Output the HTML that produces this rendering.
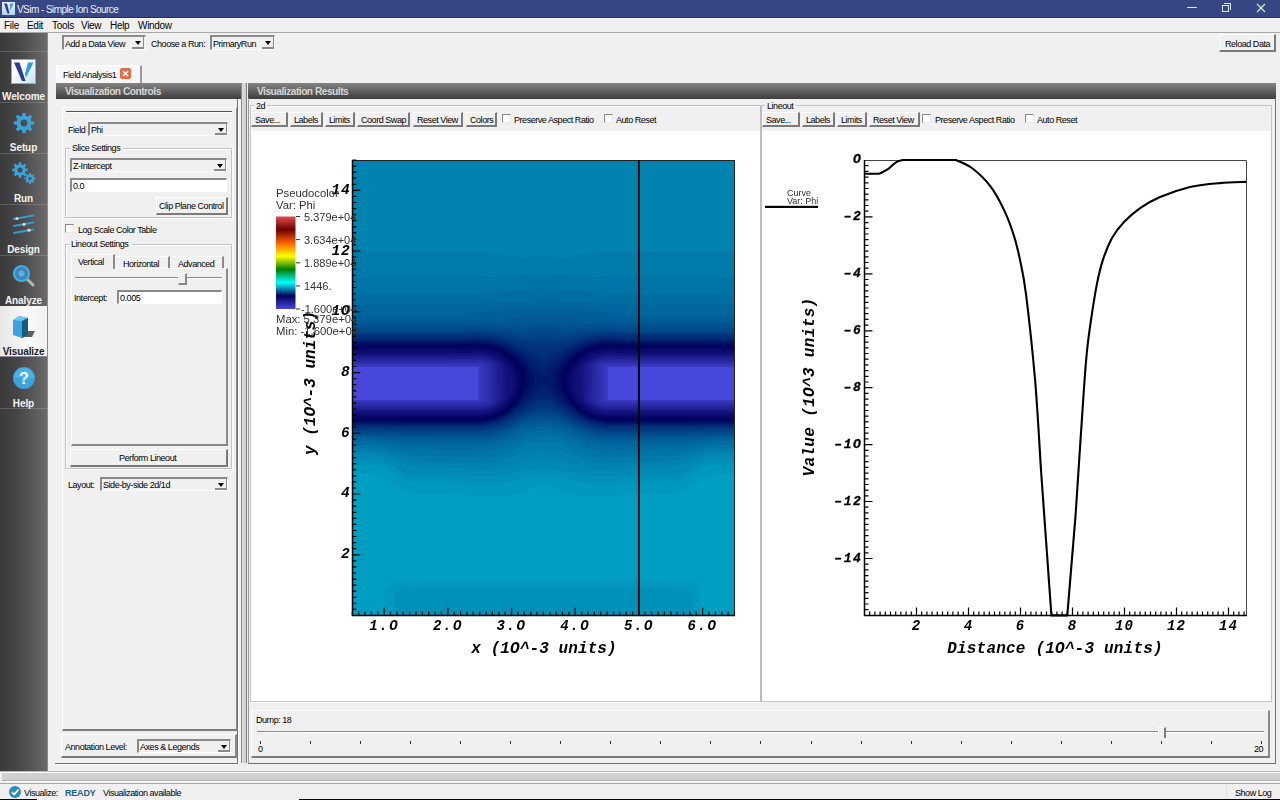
<!DOCTYPE html>
<html><head><meta charset="utf-8">
<style>
*{box-sizing:border-box;margin:0;padding:0}
html,body{width:1280px;height:800px;overflow:hidden;background:#f0f0f0;font-family:"Liberation Sans",sans-serif;font-size:9px;color:#000}
.a{position:absolute}
.t{position:absolute;white-space:nowrap;letter-spacing:-0.45px;line-height:10px;font-size:9px}
#title{left:0;top:0;width:1280px;height:18px;background:#374783;border-bottom:1px solid #1f2c6c}
#menu{left:0;top:18px;width:1280px;height:15px;background:#f0f0f0;border-top:1px solid #fafafa;border-bottom:1px solid #a9a9a9}
#side{left:0;top:33px;width:48px;height:738px;background:linear-gradient(90deg,#3a3a3a 0%,#474747 40%,#6a6a6a 100%);border-right:1px solid #8c8c8c}
.sep{position:absolute;left:0;width:47px;height:1px;background:rgba(255,255,255,0.16)}
.slabel{position:absolute;left:0;width:47px;text-align:center;color:#f4f4f4;font-weight:bold;font-size:10px;letter-spacing:-0.1px;line-height:11px;margin-top:1px}
.sunk{position:absolute;background:#f0f0f0;border-top:2px solid #8a8a8a;border-left:2px solid #8a8a8a;border-bottom:1px solid #fff;border-right:1px solid #fff}
.edit{background:#fff}
.btn{position:absolute;background:#f0f0f0;border-top:1px solid #fff;border-left:1px solid #fff;border-bottom:2px solid #7a7a7a;border-right:2px solid #7a7a7a;text-align:center}
.arrow{position:absolute;width:0;height:0;border-left:3px solid transparent;border-right:3px solid transparent;border-top:4px solid #000}
.grp{position:absolute;border:1px solid #c4c4c4;box-shadow:inset 1px 1px 0 #fff,1px 1px 0 #fff}
.hdr{position:absolute;height:16px;background:linear-gradient(#848484,#3c3c3c);color:#d6d6d6;font-weight:bold;font-size:10.2px;letter-spacing:-0.5px;line-height:16px;padding-top:1px;padding-left:9px;white-space:nowrap}
.chk{position:absolute;width:9px;height:9px;background:#fff;border-top:1px solid #8a8a8a;border-left:1px solid #8a8a8a;border-bottom:1px solid #e8e8e8;border-right:1px solid #e8e8e8}
.mono{font-family:"Liberation Mono",monospace;font-weight:bold;font-style:italic}
</style></head><body>
<!-- Title bar -->
<div id="title" class="a">
  <div class="a" style="left:2px;top:2px;width:13px;height:13px;background:linear-gradient(#e8f0f8,#b8d4ec)"></div>
  <svg class="a" style="left:2px;top:2px" width="13" height="13"><path d="M2 1.5 L5 1.5 L7.5 11.5 L5.5 11.5Z" fill="#2b3b8f"/><path d="M8 1.5 L11.5 1.5 L8.3 8.5Z" fill="#3a9ad8"/></svg>
  <div class="t" style="left:17px;top:5px;color:#eef0f6;font-size:10px;letter-spacing:-0.55px">VSim - Simple Ion Source</div>
  <div class="a" style="left:1187px;top:7px;width:10px;height:1px;background:#e0e4f0"></div>
  <div class="a" style="left:1222px;top:5px;width:7px;height:7px;border:1px solid #e0e4f0"></div>
  <div class="a" style="left:1224px;top:3px;width:7px;height:7px;border-top:1px solid #e0e4f0;border-right:1px solid #e0e4f0"></div>
  <svg class="a" style="left:1256px;top:3px" width="10" height="10"><path d="M1 1L9 9M9 1L1 9" stroke="#e8ecf4" stroke-width="1.1"/></svg>
</div>
<!-- Menu -->
<div id="menu" class="a">
  <div class="t" style="left:4px;top:2px;font-size:10px;letter-spacing:-0.3px">File</div>
  <div class="t" style="left:27px;top:2px;font-size:10px;letter-spacing:-0.3px">Edit</div>
  <div class="t" style="left:52px;top:2px;font-size:10px;letter-spacing:-0.3px">Tools</div>
  <div class="t" style="left:81px;top:2px;font-size:10px;letter-spacing:-0.3px">View</div>
  <div class="t" style="left:110px;top:2px;font-size:10px;letter-spacing:-0.3px">Help</div>
  <div class="t" style="left:138px;top:2px;font-size:10px;letter-spacing:-0.3px">Window</div>
</div>
<!-- Sidebar -->
<div id="side" class="a">
  <div class="sep" style="top:18px"></div>
  <div class="sep" style="top:69px"></div>
  <div class="sep" style="top:120px"></div>
  <div class="sep" style="top:171px"></div>
  <div class="sep" style="top:222px"></div>
  <div class="sep" style="top:273px"></div>
  <div class="a" style="left:0;top:273px;width:47px;height:51px;background:linear-gradient(90deg,#e6e6e6,#fafafa 60%,#f0f0f0);border-bottom:1px solid #8a8aa0"></div>
  <div class="sep" style="top:375px"></div>
  <!-- Welcome icon -->
  <div class="a" style="left:11px;top:26px;width:25px;height:25px;border:1px solid #6ab8e8;background:linear-gradient(135deg,#ffffff 30%,#c8e4f4)"></div>
  <svg class="a" style="left:11px;top:26px" width="25" height="25"><path d="M3 3.5 L8.5 3.5 L14.5 22 L11 22 Z" fill="#2c3a98"/><path d="M17 3.5 L22.5 3.5 L15 18.5 L14 15 Z" fill="#2f9ee0"/></svg>
  <div class="slabel" style="top:57px">Welcome</div>
  <!-- Setup gear -->
  <svg class="a" style="left:12px;top:78px" width="24" height="24"><path fill-rule="evenodd" fill="#3ba4dc" d="M9.1 5.0 L10.5 4.6 L10.2 1.9 L13.8 1.9 L13.5 4.6 L14.9 5.0 L16.2 5.7 L17.9 3.5 L20.5 6.1 L18.3 7.8 L19.0 9.1 L19.4 10.5 L22.1 10.2 L22.1 13.8 L19.4 13.5 L19.0 14.9 L18.3 16.2 L20.5 17.9 L17.9 20.5 L16.2 18.3 L14.9 19.0 L13.5 19.4 L13.8 22.1 L10.2 22.1 L10.5 19.4 L9.1 19.0 L7.8 18.3 L6.1 20.5 L3.5 17.9 L5.7 16.2 L5.0 14.9 L4.6 13.5 L1.9 13.8 L1.9 10.2 L4.6 10.5 L5.0 9.1 L5.7 7.8 L3.5 6.1 L6.1 3.5 L7.8 5.7Z M15.5 12.0 A3.5 3.5 0 1 0 8.5 12.0 A3.5 3.5 0 1 0 15.5 12.0Z"/></svg>
  <div class="slabel" style="top:108px">Setup</div>
  <!-- Run gears -->
  <svg class="a" style="left:10px;top:128px" width="28" height="26"><path fill-rule="evenodd" fill="#3ba4dc" d="M7.8 3.7 L8.8 3.4 L8.6 1.3 L11.4 1.3 L11.2 3.4 L12.2 3.7 L13.1 4.2 L14.5 2.6 L16.4 4.5 L14.8 5.9 L15.3 6.8 L15.6 7.8 L17.7 7.6 L17.7 10.4 L15.6 10.2 L15.3 11.2 L14.8 12.1 L16.4 13.5 L14.5 15.4 L13.1 13.8 L12.2 14.3 L11.2 14.6 L11.4 16.7 L8.6 16.7 L8.8 14.6 L7.8 14.3 L6.9 13.8 L5.5 15.4 L3.6 13.5 L5.2 12.1 L4.7 11.2 L4.4 10.2 L2.3 10.4 L2.3 7.6 L4.4 7.8 L4.7 6.8 L5.2 5.9 L3.6 4.5 L5.5 2.6 L6.9 4.2Z M12.5 9.0 A2.5 2.5 0 1 0 7.5 9.0 A2.5 2.5 0 1 0 12.5 9.0Z"/><path fill-rule="evenodd" fill="#3ba4dc" d="M18.4 13.7 L19.2 13.5 L19.0 12.0 L21.0 12.0 L20.8 13.5 L21.6 13.7 L22.3 14.1 L23.2 12.9 L24.6 14.3 L23.4 15.2 L23.8 15.9 L24.0 16.7 L25.5 16.5 L25.5 18.5 L24.0 18.3 L23.8 19.1 L23.4 19.8 L24.6 20.7 L23.2 22.1 L22.3 20.9 L21.6 21.3 L20.8 21.5 L21.0 23.0 L19.0 23.0 L19.2 21.5 L18.4 21.3 L17.7 20.9 L16.8 22.1 L15.4 20.7 L16.6 19.8 L16.2 19.1 L16.0 18.3 L14.5 18.5 L14.5 16.5 L16.0 16.7 L16.2 15.9 L16.6 15.2 L15.4 14.3 L16.8 12.9 L17.7 14.1Z M21.8 17.5 A1.8 1.8 0 1 0 18.2 17.5 A1.8 1.8 0 1 0 21.8 17.5Z"/></svg>
  <div class="slabel" style="top:159px">Run</div>
  <!-- Design sliders -->
  <svg class="a" style="left:12px;top:180px" width="24" height="24">
    <g stroke="#2e9ad6" stroke-width="2.2" stroke-linecap="round"><path d="M2 6 L21 2.5"/><path d="M2 13 L21 9.5"/><path d="M2 20 L21 16.5"/></g>
    <g fill="#d8d8d8"><circle cx="5" cy="5.5" r="1.6"/><circle cx="12" cy="11.3" r="1.6"/><circle cx="17" cy="17.2" r="1.6"/></g>
  </svg>
  <div class="slabel" style="top:210px">Design</div>
  <!-- Analyze magnifier -->
  <svg class="a" style="left:12px;top:231px" width="24" height="24">
    <path d="M14 14 L21 21" stroke="#b8b8b8" stroke-width="3" stroke-linecap="round"/>
    <circle cx="9.5" cy="9.5" r="7.5" fill="#3a86b8" stroke="#3db0ea" stroke-width="2.2"/>
    <circle cx="9.5" cy="9.5" r="3" fill="#6cc0ea" opacity="0.7"/>
  </svg>
  <div class="slabel" style="top:261px">Analyze</div>
  <!-- Visualize cube -->
  <svg class="a" style="left:11px;top:281px" width="26" height="26">
    <path d="M13 17 L24 17 L21 23 L11 23Z" fill="#444" opacity="0.85"/>
    <path d="M2 6 L8 2 L17 4 L17 21 L11 24 L2 21Z" fill="#3aa4dc"/>
    <path d="M2 6 L8 2 L17 4 L11 7Z" fill="#6ccaf2"/>
    <path d="M11 7 L17 4 L17 21 L11 24Z" fill="#1c5a86"/>
  </svg>
  <div class="slabel" style="top:312px;color:#1a1a1a">Visualize</div>
  <!-- Help -->
  <svg class="a" style="left:12px;top:333px" width="24" height="24">
    <circle cx="12" cy="12" r="11" fill="#3aa4dc"/>
    <path d="M2 12 A10 10 0 0 1 22 12" fill="#5cc0ee" opacity="0.5"/>
    <text x="12" y="17.5" text-anchor="middle" font-family="Liberation Sans" font-weight="bold" font-size="16" fill="#fff">?</text>
  </svg>
  <div class="slabel" style="top:364px">Help</div>
</div>

<!-- Top toolbar -->
<div class="sunk" style="left:62px;top:35px;width:84px;height:15px"></div>
<div class="t" style="left:65px;top:39px">Add a Data View</div>
<div class="t" style="left:151px;top:39px">Choose a Run:</div>
<div class="sunk" style="left:210px;top:35px;width:65px;height:15px"></div>
<div class="t" style="left:213px;top:39px">PrimaryRun</div>
<div class="btn" style="left:1219px;top:34px;width:57px;height:18px"></div>
<div class="t" style="left:1225px;top:39px">Reload Data</div>


<!-- Tab -->
<div class="a" style="left:56px;top:65px;width:86px;height:18px;background:#f7f7f7;border-top:1px solid #fff;border-left:1px solid #fff;border-right:2px solid #9a9a9a"></div>
<div class="t" style="left:63px;top:70px">Field Analysis1</div>
<div class="a" style="left:120px;top:68px;width:11px;height:11px;background:#e56a4a;border-radius:2px"></div>
<svg class="a" style="left:120px;top:68px" width="11" height="11"><path d="M3 3L8 8M8 3L3 8" stroke="#fff" stroke-width="1.6"/></svg>

<!-- Left panel outer -->
<div class="a" style="left:55px;top:98px;width:183px;height:666px;border-right:1px solid #707070;border-bottom:1px solid #707070;box-shadow:1px 1px 0 #fff"></div>
<div class="hdr" style="left:56px;top:83px;width:185px">Visualization Controls</div>
<!-- inner scroll frame -->
<div class="a" style="left:62px;top:107px;width:175px;height:624px;border-top:1px solid #fff;border-left:1px solid #fff;border-right:1px solid #8a8a8a;border-bottom:2px solid #7a7a7a"></div>
<div class="a" style="left:66px;top:111px;width:166px;height:2px;background:#555;border-bottom:1px solid #fff"></div>
<div class="t" style="left:68px;top:125px">Field</div>
<div class="sunk" style="left:88px;top:122px;width:140px;height:14px"></div>
<div class="t" style="left:91px;top:125px">Phi</div>
<div class="a" style="left:215px;top:124px;width:12px;height:11px;border-bottom:2px solid #8a8a8a;border-right:1px solid #8a8a8a"></div>
<div class="arrow" style="left:218px;top:128px"></div>

<div class="grp" style="left:65px;top:148px;width:167px;height:70px"></div>
<div class="a" style="left:70px;top:143px;width:53px;height:10px;background:#f0f0f0"></div>
<div class="t" style="left:72px;top:143px">Slice Settings</div>
<div class="sunk" style="left:70px;top:158px;width:157px;height:14px"></div>
<div class="t" style="left:73px;top:161px">Z-Intercept</div>
<div class="a" style="left:214px;top:160px;width:12px;height:11px;border-bottom:2px solid #8a8a8a;border-right:1px solid #8a8a8a"></div>
<div class="arrow" style="left:217px;top:164px"></div>
<div class="sunk edit" style="left:70px;top:178px;width:157px;height:14px"></div>
<div class="t" style="left:73px;top:181px">0.0</div>
<div class="btn" style="left:156px;top:197px;width:72px;height:18px"></div>
<div class="t" style="left:159px;top:201px">Clip Plane Control</div>

<div class="chk" style="left:65px;top:224px"></div>
<div class="t" style="left:78px;top:225px">Log Scale Color Table</div>

<div class="grp" style="left:65px;top:244px;width:167px;height:225px"></div>
<div class="a" style="left:70px;top:239px;width:62px;height:10px;background:#f0f0f0"></div>
<div class="t" style="left:71px;top:239px">Lineout Settings</div>
<!-- tabs -->
<div class="a" style="left:71px;top:268px;width:157px;height:178px;border-top:1px solid #fff;border-left:1px solid #fff;border-right:2px solid #8a8a8a;border-bottom:2px solid #8a8a8a"></div>
<div class="a" style="left:71px;top:254px;width:44px;height:15px;background:#f0f0f0;border-top:1px solid #fff;border-left:1px solid #fff;border-right:2px solid #8a8a8a"></div>
<div class="t" style="left:78px;top:257px">Vertical</div>
<div class="a" style="left:116px;top:256px;width:54px;height:12px;border-top:1px solid #fff;border-right:2px solid #8a8a8a"></div>
<div class="t" style="left:123px;top:259px">Horizontal</div>
<div class="a" style="left:171px;top:256px;width:53px;height:12px;border-top:1px solid #fff;border-right:2px solid #8a8a8a"></div>
<div class="t" style="left:178px;top:259px">Advanced</div>
<div class="a" style="left:75px;top:277px;width:147px;height:2px;background:#8a8a8a;border-bottom:1px solid #fff"></div>
<div class="a" style="left:178px;top:273px;width:9px;height:12px;background:#f0f0f0;border-top:1px solid #fff;border-left:1px solid #fff;border-right:2px solid #8a8a8a;border-bottom:2px solid #8a8a8a"></div>
<div class="t" style="left:74px;top:293px">Intercept:</div>
<div class="sunk edit" style="left:117px;top:290px;width:105px;height:14px"></div>
<div class="t" style="left:120px;top:293px">0.005</div>
<div class="btn" style="left:70px;top:449px;width:158px;height:18px"></div>
<div class="t" style="left:119px;top:453px">Perform Lineout</div>

<div class="t" style="left:68px;top:480px">Layout:</div>
<div class="sunk" style="left:100px;top:477px;width:128px;height:14px"></div>
<div class="t" style="left:103px;top:480px">Side-by-side 2d/1d</div>
<div class="a" style="left:215px;top:479px;width:12px;height:11px;border-bottom:2px solid #8a8a8a;border-right:1px solid #8a8a8a"></div>
<div class="arrow" style="left:218px;top:483px"></div>

<div class="a" style="left:61px;top:734px;width:176px;height:24px;border-top:1px solid #fff;border-left:1px solid #fff;border-right:2px solid #8a8a8a;border-bottom:2px solid #7a7a7a"></div>
<div class="t" style="left:65px;top:742px">Annotation Level:</div>
<div class="sunk" style="left:137px;top:739px;width:94px;height:14px"></div>
<div class="t" style="left:140px;top:742px">Axes &amp; Legends</div>
<div class="a" style="left:218px;top:741px;width:12px;height:11px;border-bottom:2px solid #8a8a8a;border-right:1px solid #8a8a8a"></div>
<div class="arrow" style="left:221px;top:745px"></div>

<!-- splitter -->
<div class="a" style="left:241px;top:83px;width:7px;height:680px;background:linear-gradient(90deg,#8c8c8c 0,#8c8c8c 1px,#dcdcdc 1px,#cfcfcf 5px,#7c7c7c 5px,#7c7c7c 6px,#f0f0f0 6px)"></div>

<!-- Right panel -->
<div class="hdr" style="left:248px;top:83px;width:1028px">Visualization Results</div>
<div class="a" style="left:248px;top:98px;width:1028px;height:666px;border-left:1px solid #9a9a9a;border-right:1px solid #707070;border-bottom:1px solid #707070"></div>
<!-- 2d group -->
<div class="grp" style="left:250px;top:105px;width:511px;height:597px"></div>
<div class="a" style="left:254px;top:100px;width:13px;height:10px;background:#f0f0f0"></div>
<div class="t" style="left:256px;top:101px">2d</div>
<div class="a" style="left:251px;top:131px;width:509px;height:570px;background:#fff"></div>
<!-- lineout group -->
<div class="grp" style="left:760px;top:105px;width:512px;height:597px;box-shadow:none;border-left:2px solid #bdbdbd"></div>
<div class="a" style="left:765px;top:100px;width:31px;height:10px;background:#f0f0f0"></div>
<div class="t" style="left:767px;top:101px">Lineout</div>
<div class="a" style="left:762px;top:131px;width:509px;height:570px;background:#fff"></div>

<!-- Dump -->
<div class="a" style="left:251px;top:710px;width:1019px;height:48px;border-top:1px solid #fff;border-left:1px solid #fff;border-right:2px solid #8a8a8a;border-bottom:2px solid #7a7a7a"></div>
<div class="t" style="left:256px;top:715px">Dump: 18</div>
<div class="a" style="left:257px;top:731px;width:1007px;height:2px;background:#8a8a8a;border-bottom:1px solid #fff"></div>

<!-- bottom band -->
<div class="a" style="left:0;top:771px;width:1280px;height:12px;background:#f0f0f0;border-top:1px solid #b8b8b8"></div>
<div class="a" style="left:2px;top:772px;width:1278px;height:9px;background:#d0d0d0;border-top:1px solid #fff;border-bottom:1px solid #b0b0b0;box-shadow:0 1px 0 #fff"></div>
<div class="a" style="left:0;top:783px;width:1280px;height:1px;background:#a8a8a8"></div>
<div class="a" style="left:9px;top:786px;width:12px;height:12px;border-radius:50%;background:#2a8ac2"></div>
<svg class="a" style="left:9px;top:786px" width="12" height="12"><path d="M3 6.2L5.2 8.5L9.5 3.5" stroke="#fff" stroke-width="1.8" fill="none"/></svg>
<div class="t" style="left:24px;top:788px">Visualize:</div>
<div class="t" style="left:65px;top:788px;font-weight:bold;color:#1a5e8e;letter-spacing:-0.2px">READY</div>
<div class="t" style="left:103px;top:788px">Visualization available</div>
<div class="a" style="left:1226px;top:784px;width:1px;height:15px;background:#e0e0e0"></div>
<div class="t" style="left:1235px;top:788px">Show Log</div>
<div class="a" style="left:0;top:799px;width:37px;height:1px;background:#000"></div>
<div class="a" style="left:299px;top:799px;width:981px;height:1px;background:#000"></div>

<div class="a" style="left:132px;top:37px;width:12px;height:12px;border-bottom:2px solid #8a8a8a;border-right:1px solid #8a8a8a"></div>
<div class="arrow" style="left:135px;top:41px"></div>
<div class="a" style="left:262px;top:37px;width:12px;height:12px;border-bottom:2px solid #8a8a8a;border-right:1px solid #8a8a8a"></div>
<div class="arrow" style="left:265px;top:41px"></div>
<!-- 2d toolbar -->
<div class="btn" style="left:251px;top:112px;width:37px;height:15px"></div><div class="t" style="left:255px;top:115px">Save...</div>
<div class="btn" style="left:290px;top:112px;width:33px;height:15px"></div><div class="t" style="left:294px;top:115px">Labels</div>
<div class="btn" style="left:325px;top:112px;width:30px;height:15px"></div><div class="t" style="left:329px;top:115px">Limits</div>
<div class="btn" style="left:357px;top:112px;width:53px;height:15px"></div><div class="t" style="left:361px;top:115px">Coord Swap</div>
<div class="btn" style="left:413px;top:112px;width:50px;height:15px"></div><div class="t" style="left:417px;top:115px">Reset View</div>
<div class="btn" style="left:466px;top:112px;width:31px;height:15px"></div><div class="t" style="left:470px;top:115px">Colors</div>
<div class="chk" style="left:502px;top:114px"></div><div class="t" style="left:514px;top:115px">Preserve Aspect Ratio</div>
<div class="chk" style="left:604px;top:114px"></div><div class="t" style="left:616px;top:115px">Auto Reset</div>
<!-- lineout toolbar -->
<div class="btn" style="left:762px;top:112px;width:38px;height:15px"></div><div class="t" style="left:766px;top:115px">Save...</div>
<div class="btn" style="left:802px;top:112px;width:33px;height:15px"></div><div class="t" style="left:806px;top:115px">Labels</div>
<div class="btn" style="left:837px;top:112px;width:30px;height:15px"></div><div class="t" style="left:841px;top:115px">Limits</div>
<div class="btn" style="left:869px;top:112px;width:51px;height:15px"></div><div class="t" style="left:873px;top:115px">Reset View</div>
<div class="chk" style="left:922px;top:114px"></div><div class="t" style="left:935px;top:115px">Preserve Aspect Ratio</div>
<div class="chk" style="left:1025px;top:114px"></div><div class="t" style="left:1037px;top:115px">Auto Reset</div>
<!-- dump slider -->
<div class="a" style="left:1158px;top:727px;width:8px;height:11px;background:#f0f0f0;border-top:1px solid #fff;border-left:1px solid #fff;border-right:2px solid #7a7a7a"></div>
<div class="t" style="left:258px;top:744px">0</div>
<div class="t" style="left:1254px;top:744px">20</div>
<div class="a" style="left:260px;top:741px;width:1px;height:3px;background:#333"></div><div class="a" style="left:310px;top:741px;width:1px;height:3px;background:#333"></div><div class="a" style="left:360px;top:741px;width:1px;height:3px;background:#333"></div><div class="a" style="left:410px;top:741px;width:1px;height:3px;background:#333"></div><div class="a" style="left:460px;top:741px;width:1px;height:3px;background:#333"></div><div class="a" style="left:510px;top:741px;width:1px;height:3px;background:#333"></div><div class="a" style="left:560px;top:741px;width:1px;height:3px;background:#333"></div><div class="a" style="left:610px;top:741px;width:1px;height:3px;background:#333"></div><div class="a" style="left:660px;top:741px;width:1px;height:3px;background:#333"></div><div class="a" style="left:710px;top:741px;width:1px;height:3px;background:#333"></div><div class="a" style="left:760px;top:741px;width:1px;height:3px;background:#333"></div><div class="a" style="left:811px;top:741px;width:1px;height:3px;background:#333"></div><div class="a" style="left:861px;top:741px;width:1px;height:3px;background:#333"></div><div class="a" style="left:911px;top:741px;width:1px;height:3px;background:#333"></div><div class="a" style="left:961px;top:741px;width:1px;height:3px;background:#333"></div><div class="a" style="left:1011px;top:741px;width:1px;height:3px;background:#333"></div><div class="a" style="left:1061px;top:741px;width:1px;height:3px;background:#333"></div><div class="a" style="left:1111px;top:741px;width:1px;height:3px;background:#333"></div><div class="a" style="left:1161px;top:741px;width:1px;height:3px;background:#333"></div><div class="a" style="left:1211px;top:741px;width:1px;height:3px;background:#333"></div><div class="a" style="left:1261px;top:741px;width:1px;height:3px;background:#333"></div>
<!--PLOTS-->
<svg class="a" style="left:352px;top:160px" width="383" height="456"><defs><linearGradient id="f0" x1="0" y1="0" x2="0" y2="1"><stop offset="0.000" stop-color="#0083af"/><stop offset="0.200" stop-color="#0083af"/><stop offset="0.209" stop-color="#007baa"/><stop offset="0.255" stop-color="#007baa"/><stop offset="0.270" stop-color="#0074a6"/><stop offset="0.295" stop-color="#0074a6"/><stop offset="0.310" stop-color="#006da1"/><stop offset="0.341" stop-color="#00669d"/><stop offset="0.378" stop-color="#004386"/><stop offset="0.398" stop-color="#00196b"/><stop offset="0.409" stop-color="#01015d"/><stop offset="0.429" stop-color="#161683"/><stop offset="0.453" stop-color="#3939c2"/><stop offset="0.455" stop-color="#4747db"/><stop offset="0.525" stop-color="#4747db"/><stop offset="0.527" stop-color="#3737bf"/><stop offset="0.567" stop-color="#030360"/><stop offset="0.574" stop-color="#000b62"/><stop offset="0.587" stop-color="#00357d"/><stop offset="0.620" stop-color="#006da1"/><stop offset="0.653" stop-color="#008ab3"/><stop offset="0.684" stop-color="#0098bd"/><stop offset="0.730" stop-color="#009fc1"/><stop offset="1.000" stop-color="#009fc1"/></linearGradient><linearGradient id="f1" x1="0" y1="0" x2="0" y2="1"><stop offset="0.000" stop-color="#0083af"/><stop offset="0.200" stop-color="#0083af"/><stop offset="0.209" stop-color="#007baa"/><stop offset="0.255" stop-color="#007baa"/><stop offset="0.270" stop-color="#0074a6"/><stop offset="0.295" stop-color="#0074a6"/><stop offset="0.310" stop-color="#006da1"/><stop offset="0.341" stop-color="#00669d"/><stop offset="0.378" stop-color="#004386"/><stop offset="0.398" stop-color="#00196b"/><stop offset="0.409" stop-color="#01015d"/><stop offset="0.429" stop-color="#161683"/><stop offset="0.453" stop-color="#3939c2"/><stop offset="0.455" stop-color="#4747db"/><stop offset="0.525" stop-color="#4747db"/><stop offset="0.527" stop-color="#3737bf"/><stop offset="0.567" stop-color="#030360"/><stop offset="0.574" stop-color="#000b62"/><stop offset="0.587" stop-color="#00357d"/><stop offset="0.620" stop-color="#006da1"/><stop offset="0.653" stop-color="#008ab3"/><stop offset="0.686" stop-color="#0098bd"/><stop offset="0.732" stop-color="#009fc1"/><stop offset="1.000" stop-color="#009fc1"/></linearGradient><linearGradient id="f2" x1="0" y1="0" x2="0" y2="1"><stop offset="0.000" stop-color="#0083af"/><stop offset="0.200" stop-color="#0083af"/><stop offset="0.209" stop-color="#007baa"/><stop offset="0.255" stop-color="#007baa"/><stop offset="0.270" stop-color="#0074a6"/><stop offset="0.295" stop-color="#0074a6"/><stop offset="0.310" stop-color="#006da1"/><stop offset="0.341" stop-color="#00669d"/><stop offset="0.378" stop-color="#004386"/><stop offset="0.398" stop-color="#00196b"/><stop offset="0.409" stop-color="#01015d"/><stop offset="0.429" stop-color="#161683"/><stop offset="0.453" stop-color="#3939c2"/><stop offset="0.455" stop-color="#4747db"/><stop offset="0.525" stop-color="#4747db"/><stop offset="0.527" stop-color="#3737bf"/><stop offset="0.567" stop-color="#030360"/><stop offset="0.574" stop-color="#000b62"/><stop offset="0.587" stop-color="#00357d"/><stop offset="0.622" stop-color="#006da1"/><stop offset="0.666" stop-color="#0091b8"/><stop offset="0.719" stop-color="#009fc1"/><stop offset="1.000" stop-color="#009fc1"/></linearGradient><linearGradient id="f3" x1="0" y1="0" x2="0" y2="1"><stop offset="0.000" stop-color="#0083af"/><stop offset="0.200" stop-color="#0083af"/><stop offset="0.209" stop-color="#007baa"/><stop offset="0.255" stop-color="#007baa"/><stop offset="0.270" stop-color="#0074a6"/><stop offset="0.295" stop-color="#0074a6"/><stop offset="0.310" stop-color="#006da1"/><stop offset="0.341" stop-color="#00669d"/><stop offset="0.378" stop-color="#004386"/><stop offset="0.398" stop-color="#00196b"/><stop offset="0.409" stop-color="#01015d"/><stop offset="0.429" stop-color="#161683"/><stop offset="0.453" stop-color="#3939c2"/><stop offset="0.455" stop-color="#4747db"/><stop offset="0.525" stop-color="#4747db"/><stop offset="0.527" stop-color="#3737bf"/><stop offset="0.567" stop-color="#030360"/><stop offset="0.574" stop-color="#000b62"/><stop offset="0.587" stop-color="#00357d"/><stop offset="0.622" stop-color="#006da1"/><stop offset="0.673" stop-color="#0091b8"/><stop offset="0.725" stop-color="#009fc1"/><stop offset="1.000" stop-color="#009cbf"/></linearGradient><linearGradient id="f4" x1="0" y1="0" x2="0" y2="1"><stop offset="0.000" stop-color="#0083af"/><stop offset="0.200" stop-color="#0083af"/><stop offset="0.209" stop-color="#007baa"/><stop offset="0.255" stop-color="#007baa"/><stop offset="0.270" stop-color="#0074a6"/><stop offset="0.295" stop-color="#0074a6"/><stop offset="0.310" stop-color="#006da1"/><stop offset="0.341" stop-color="#00669d"/><stop offset="0.378" stop-color="#004386"/><stop offset="0.398" stop-color="#00196b"/><stop offset="0.409" stop-color="#01015d"/><stop offset="0.429" stop-color="#161683"/><stop offset="0.453" stop-color="#3939c2"/><stop offset="0.455" stop-color="#4747db"/><stop offset="0.525" stop-color="#4747db"/><stop offset="0.527" stop-color="#3737bf"/><stop offset="0.567" stop-color="#030360"/><stop offset="0.574" stop-color="#000b62"/><stop offset="0.587" stop-color="#00357d"/><stop offset="0.618" stop-color="#00669d"/><stop offset="0.675" stop-color="#0091b8"/><stop offset="0.738" stop-color="#009fc1"/><stop offset="0.927" stop-color="#0099be"/><stop offset="1.000" stop-color="#0098bd"/></linearGradient><linearGradient id="f5" x1="0" y1="0" x2="0" y2="1"><stop offset="0.000" stop-color="#0083af"/><stop offset="0.200" stop-color="#0083af"/><stop offset="0.209" stop-color="#007baa"/><stop offset="0.255" stop-color="#007baa"/><stop offset="0.270" stop-color="#0074a6"/><stop offset="0.295" stop-color="#0074a6"/><stop offset="0.310" stop-color="#006da1"/><stop offset="0.341" stop-color="#00669d"/><stop offset="0.378" stop-color="#004386"/><stop offset="0.398" stop-color="#00196b"/><stop offset="0.409" stop-color="#01015d"/><stop offset="0.429" stop-color="#161683"/><stop offset="0.453" stop-color="#3939c2"/><stop offset="0.455" stop-color="#4747db"/><stop offset="0.525" stop-color="#4747db"/><stop offset="0.527" stop-color="#3737bf"/><stop offset="0.567" stop-color="#030360"/><stop offset="0.574" stop-color="#000b62"/><stop offset="0.587" stop-color="#00357d"/><stop offset="0.626" stop-color="#006da1"/><stop offset="0.688" stop-color="#0091b8"/><stop offset="0.745" stop-color="#009fc1"/><stop offset="0.923" stop-color="#009abe"/><stop offset="0.996" stop-color="#0091b8"/><stop offset="1.000" stop-color="#0091b8"/></linearGradient><linearGradient id="f6" x1="0" y1="0" x2="0" y2="1"><stop offset="0.000" stop-color="#0083af"/><stop offset="0.200" stop-color="#0083af"/><stop offset="0.209" stop-color="#007baa"/><stop offset="0.255" stop-color="#007baa"/><stop offset="0.270" stop-color="#0074a6"/><stop offset="0.295" stop-color="#0074a6"/><stop offset="0.310" stop-color="#006da1"/><stop offset="0.341" stop-color="#00669d"/><stop offset="0.378" stop-color="#004386"/><stop offset="0.398" stop-color="#00196b"/><stop offset="0.409" stop-color="#01015d"/><stop offset="0.429" stop-color="#161683"/><stop offset="0.453" stop-color="#3939c2"/><stop offset="0.455" stop-color="#4747db"/><stop offset="0.525" stop-color="#4747db"/><stop offset="0.527" stop-color="#3737bf"/><stop offset="0.567" stop-color="#030360"/><stop offset="0.574" stop-color="#000b62"/><stop offset="0.587" stop-color="#00357d"/><stop offset="0.626" stop-color="#006da1"/><stop offset="0.695" stop-color="#0091b8"/><stop offset="0.752" stop-color="#009fc1"/><stop offset="0.921" stop-color="#009fc1"/><stop offset="0.934" stop-color="#0098bd"/><stop offset="0.993" stop-color="#0091b8"/><stop offset="1.000" stop-color="#0091b8"/></linearGradient><linearGradient id="f7" x1="0" y1="0" x2="0" y2="1"><stop offset="0.000" stop-color="#0083af"/><stop offset="0.200" stop-color="#0083af"/><stop offset="0.209" stop-color="#007baa"/><stop offset="0.255" stop-color="#007baa"/><stop offset="0.270" stop-color="#0074a6"/><stop offset="0.295" stop-color="#0074a6"/><stop offset="0.310" stop-color="#006da1"/><stop offset="0.341" stop-color="#00669d"/><stop offset="0.378" stop-color="#004386"/><stop offset="0.398" stop-color="#00196b"/><stop offset="0.409" stop-color="#01015d"/><stop offset="0.429" stop-color="#161683"/><stop offset="0.453" stop-color="#3939c2"/><stop offset="0.455" stop-color="#4747db"/><stop offset="0.525" stop-color="#4747db"/><stop offset="0.527" stop-color="#3737bf"/><stop offset="0.567" stop-color="#030360"/><stop offset="0.574" stop-color="#000b62"/><stop offset="0.587" stop-color="#00357d"/><stop offset="0.622" stop-color="#00669d"/><stop offset="0.684" stop-color="#008ab3"/><stop offset="0.721" stop-color="#0098bd"/><stop offset="0.798" stop-color="#009fc1"/><stop offset="0.921" stop-color="#009fc1"/><stop offset="0.934" stop-color="#0098bd"/><stop offset="0.978" stop-color="#0091b8"/><stop offset="1.000" stop-color="#0091b8"/></linearGradient><linearGradient id="f8" x1="0" y1="0" x2="0" y2="1"><stop offset="0.000" stop-color="#0083af"/><stop offset="0.200" stop-color="#0083af"/><stop offset="0.209" stop-color="#007baa"/><stop offset="0.255" stop-color="#007baa"/><stop offset="0.270" stop-color="#0074a6"/><stop offset="0.295" stop-color="#0074a6"/><stop offset="0.310" stop-color="#006da1"/><stop offset="0.341" stop-color="#00669d"/><stop offset="0.378" stop-color="#004386"/><stop offset="0.398" stop-color="#00196b"/><stop offset="0.409" stop-color="#01015d"/><stop offset="0.429" stop-color="#161683"/><stop offset="0.453" stop-color="#3939c2"/><stop offset="0.455" stop-color="#4747db"/><stop offset="0.525" stop-color="#4747db"/><stop offset="0.527" stop-color="#3737bf"/><stop offset="0.567" stop-color="#030360"/><stop offset="0.574" stop-color="#000b62"/><stop offset="0.587" stop-color="#00357d"/><stop offset="0.622" stop-color="#00669d"/><stop offset="0.659" stop-color="#007baa"/><stop offset="0.668" stop-color="#0083af"/><stop offset="0.719" stop-color="#0098bd"/><stop offset="0.811" stop-color="#009fc1"/><stop offset="0.921" stop-color="#009fc1"/><stop offset="0.934" stop-color="#0098bd"/><stop offset="0.978" stop-color="#0091b8"/><stop offset="1.000" stop-color="#0091b8"/></linearGradient><linearGradient id="f9" x1="0" y1="0" x2="0" y2="1"><stop offset="0.000" stop-color="#0083af"/><stop offset="0.200" stop-color="#0083af"/><stop offset="0.209" stop-color="#007baa"/><stop offset="0.255" stop-color="#007baa"/><stop offset="0.270" stop-color="#0074a6"/><stop offset="0.295" stop-color="#0074a6"/><stop offset="0.310" stop-color="#006da1"/><stop offset="0.341" stop-color="#00669d"/><stop offset="0.378" stop-color="#004386"/><stop offset="0.398" stop-color="#00196b"/><stop offset="0.409" stop-color="#01015d"/><stop offset="0.429" stop-color="#161683"/><stop offset="0.453" stop-color="#3939c2"/><stop offset="0.455" stop-color="#4747db"/><stop offset="0.525" stop-color="#4747db"/><stop offset="0.527" stop-color="#3737bf"/><stop offset="0.567" stop-color="#030360"/><stop offset="0.574" stop-color="#000b62"/><stop offset="0.587" stop-color="#00357d"/><stop offset="0.622" stop-color="#00669d"/><stop offset="0.659" stop-color="#007baa"/><stop offset="0.668" stop-color="#0083af"/><stop offset="0.723" stop-color="#0098bd"/><stop offset="0.785" stop-color="#009fc1"/><stop offset="0.921" stop-color="#009fc1"/><stop offset="0.934" stop-color="#0098bd"/><stop offset="0.978" stop-color="#0091b8"/><stop offset="1.000" stop-color="#0091b8"/></linearGradient><linearGradient id="f10" x1="0" y1="0" x2="0" y2="1"><stop offset="0.000" stop-color="#0083af"/><stop offset="0.200" stop-color="#0083af"/><stop offset="0.209" stop-color="#007baa"/><stop offset="0.255" stop-color="#007baa"/><stop offset="0.270" stop-color="#0074a6"/><stop offset="0.295" stop-color="#0074a6"/><stop offset="0.310" stop-color="#006da1"/><stop offset="0.341" stop-color="#00669d"/><stop offset="0.378" stop-color="#004386"/><stop offset="0.398" stop-color="#00196b"/><stop offset="0.409" stop-color="#01015d"/><stop offset="0.429" stop-color="#161683"/><stop offset="0.453" stop-color="#3939c2"/><stop offset="0.455" stop-color="#4747db"/><stop offset="0.525" stop-color="#4747db"/><stop offset="0.527" stop-color="#3737bf"/><stop offset="0.567" stop-color="#030360"/><stop offset="0.574" stop-color="#000b62"/><stop offset="0.587" stop-color="#00357d"/><stop offset="0.622" stop-color="#00669d"/><stop offset="0.684" stop-color="#008ab3"/><stop offset="0.725" stop-color="#0098bd"/><stop offset="0.771" stop-color="#009fc1"/><stop offset="0.921" stop-color="#009fc1"/><stop offset="0.934" stop-color="#0098bd"/><stop offset="0.978" stop-color="#0091b8"/><stop offset="1.000" stop-color="#0091b8"/></linearGradient><linearGradient id="f11" x1="0" y1="0" x2="0" y2="1"><stop offset="0.000" stop-color="#0083af"/><stop offset="0.200" stop-color="#0083af"/><stop offset="0.209" stop-color="#007baa"/><stop offset="0.255" stop-color="#007baa"/><stop offset="0.270" stop-color="#0074a6"/><stop offset="0.295" stop-color="#0074a6"/><stop offset="0.310" stop-color="#006da1"/><stop offset="0.341" stop-color="#00669d"/><stop offset="0.378" stop-color="#004386"/><stop offset="0.398" stop-color="#00196b"/><stop offset="0.409" stop-color="#01015d"/><stop offset="0.429" stop-color="#161683"/><stop offset="0.453" stop-color="#3939c2"/><stop offset="0.455" stop-color="#4747db"/><stop offset="0.525" stop-color="#4747db"/><stop offset="0.527" stop-color="#3737bf"/><stop offset="0.567" stop-color="#030360"/><stop offset="0.574" stop-color="#000b62"/><stop offset="0.587" stop-color="#00357d"/><stop offset="0.622" stop-color="#00669d"/><stop offset="0.662" stop-color="#007baa"/><stop offset="0.670" stop-color="#0083af"/><stop offset="0.721" stop-color="#0098bd"/><stop offset="0.798" stop-color="#009fc1"/><stop offset="0.921" stop-color="#009fc1"/><stop offset="0.934" stop-color="#0098bd"/><stop offset="0.978" stop-color="#0091b8"/><stop offset="1.000" stop-color="#0091b8"/></linearGradient><linearGradient id="f12" x1="0" y1="0" x2="0" y2="1"><stop offset="0.000" stop-color="#0083af"/><stop offset="0.200" stop-color="#0083af"/><stop offset="0.209" stop-color="#007baa"/><stop offset="0.255" stop-color="#007baa"/><stop offset="0.270" stop-color="#0074a6"/><stop offset="0.295" stop-color="#0074a6"/><stop offset="0.310" stop-color="#006da1"/><stop offset="0.341" stop-color="#00669d"/><stop offset="0.378" stop-color="#004386"/><stop offset="0.398" stop-color="#00196b"/><stop offset="0.409" stop-color="#01015d"/><stop offset="0.429" stop-color="#161683"/><stop offset="0.453" stop-color="#3939c2"/><stop offset="0.455" stop-color="#4747db"/><stop offset="0.525" stop-color="#4747db"/><stop offset="0.527" stop-color="#3737bf"/><stop offset="0.567" stop-color="#030360"/><stop offset="0.574" stop-color="#000b62"/><stop offset="0.587" stop-color="#00357d"/><stop offset="0.622" stop-color="#00669d"/><stop offset="0.662" stop-color="#007baa"/><stop offset="0.670" stop-color="#0083af"/><stop offset="0.721" stop-color="#0098bd"/><stop offset="0.813" stop-color="#009fc1"/><stop offset="0.921" stop-color="#009fc1"/><stop offset="0.934" stop-color="#0098bd"/><stop offset="0.978" stop-color="#0091b8"/><stop offset="1.000" stop-color="#0091b8"/></linearGradient><linearGradient id="f13" x1="0" y1="0" x2="0" y2="1"><stop offset="0.000" stop-color="#0083af"/><stop offset="0.200" stop-color="#0083af"/><stop offset="0.209" stop-color="#007baa"/><stop offset="0.255" stop-color="#007baa"/><stop offset="0.270" stop-color="#0074a6"/><stop offset="0.295" stop-color="#0074a6"/><stop offset="0.310" stop-color="#006da1"/><stop offset="0.341" stop-color="#00669d"/><stop offset="0.378" stop-color="#004386"/><stop offset="0.398" stop-color="#00196b"/><stop offset="0.409" stop-color="#01015d"/><stop offset="0.429" stop-color="#161683"/><stop offset="0.453" stop-color="#3939c2"/><stop offset="0.455" stop-color="#4747db"/><stop offset="0.525" stop-color="#4747db"/><stop offset="0.527" stop-color="#3737bf"/><stop offset="0.567" stop-color="#030360"/><stop offset="0.574" stop-color="#000b62"/><stop offset="0.587" stop-color="#00357d"/><stop offset="0.622" stop-color="#00669d"/><stop offset="0.662" stop-color="#007baa"/><stop offset="0.670" stop-color="#0083af"/><stop offset="0.725" stop-color="#0098bd"/><stop offset="0.787" stop-color="#009fc1"/><stop offset="0.921" stop-color="#009fc1"/><stop offset="0.934" stop-color="#0098bd"/><stop offset="0.978" stop-color="#0091b8"/><stop offset="1.000" stop-color="#0091b8"/></linearGradient><linearGradient id="f14" x1="0" y1="0" x2="0" y2="1"><stop offset="0.000" stop-color="#0083af"/><stop offset="0.200" stop-color="#0083af"/><stop offset="0.209" stop-color="#007baa"/><stop offset="0.255" stop-color="#007baa"/><stop offset="0.270" stop-color="#0074a6"/><stop offset="0.295" stop-color="#0074a6"/><stop offset="0.310" stop-color="#006da1"/><stop offset="0.341" stop-color="#00669d"/><stop offset="0.378" stop-color="#004285"/><stop offset="0.398" stop-color="#00196b"/><stop offset="0.409" stop-color="#01015d"/><stop offset="0.431" stop-color="#1a1a8a"/><stop offset="0.453" stop-color="#3939c2"/><stop offset="0.455" stop-color="#4747db"/><stop offset="0.525" stop-color="#4747db"/><stop offset="0.527" stop-color="#3737bf"/><stop offset="0.567" stop-color="#030360"/><stop offset="0.574" stop-color="#000b62"/><stop offset="0.587" stop-color="#00357d"/><stop offset="0.622" stop-color="#00669d"/><stop offset="0.688" stop-color="#008ab3"/><stop offset="0.725" stop-color="#0098bd"/><stop offset="0.802" stop-color="#009fc1"/><stop offset="0.921" stop-color="#009fc1"/><stop offset="0.934" stop-color="#0098bd"/><stop offset="0.978" stop-color="#0091b8"/><stop offset="1.000" stop-color="#0091b8"/></linearGradient><linearGradient id="f15" x1="0" y1="0" x2="0" y2="1"><stop offset="0.000" stop-color="#0083af"/><stop offset="0.200" stop-color="#0083af"/><stop offset="0.209" stop-color="#007baa"/><stop offset="0.255" stop-color="#007baa"/><stop offset="0.270" stop-color="#0074a6"/><stop offset="0.295" stop-color="#0074a6"/><stop offset="0.310" stop-color="#006da1"/><stop offset="0.352" stop-color="#005f98"/><stop offset="0.380" stop-color="#003c82"/><stop offset="0.400" stop-color="#001266"/><stop offset="0.409" stop-color="#01015d"/><stop offset="0.431" stop-color="#1a1a8a"/><stop offset="0.453" stop-color="#3939c2"/><stop offset="0.455" stop-color="#4747db"/><stop offset="0.525" stop-color="#4747db"/><stop offset="0.527" stop-color="#3737bf"/><stop offset="0.567" stop-color="#030360"/><stop offset="0.574" stop-color="#000b62"/><stop offset="0.587" stop-color="#00357d"/><stop offset="0.622" stop-color="#00669d"/><stop offset="0.664" stop-color="#007baa"/><stop offset="0.673" stop-color="#0083af"/><stop offset="0.723" stop-color="#0098bd"/><stop offset="0.815" stop-color="#009fc1"/><stop offset="0.921" stop-color="#009fc1"/><stop offset="0.934" stop-color="#0098bd"/><stop offset="0.978" stop-color="#0091b8"/><stop offset="1.000" stop-color="#0091b8"/></linearGradient><linearGradient id="f16" x1="0" y1="0" x2="0" y2="1"><stop offset="0.000" stop-color="#0083af"/><stop offset="0.200" stop-color="#0083af"/><stop offset="0.209" stop-color="#007baa"/><stop offset="0.255" stop-color="#007baa"/><stop offset="0.270" stop-color="#0074a6"/><stop offset="0.295" stop-color="#0074a6"/><stop offset="0.310" stop-color="#006da1"/><stop offset="0.358" stop-color="#005894"/><stop offset="0.391" stop-color="#002774"/><stop offset="0.407" stop-color="#00035d"/><stop offset="0.429" stop-color="#161683"/><stop offset="0.453" stop-color="#3939c2"/><stop offset="0.455" stop-color="#4747db"/><stop offset="0.525" stop-color="#4747db"/><stop offset="0.527" stop-color="#3737bf"/><stop offset="0.567" stop-color="#030360"/><stop offset="0.574" stop-color="#000b62"/><stop offset="0.587" stop-color="#00357d"/><stop offset="0.622" stop-color="#00669d"/><stop offset="0.664" stop-color="#007baa"/><stop offset="0.673" stop-color="#0083af"/><stop offset="0.727" stop-color="#0098bd"/><stop offset="0.789" stop-color="#009fc1"/><stop offset="0.921" stop-color="#009fc1"/><stop offset="0.934" stop-color="#0098bd"/><stop offset="0.978" stop-color="#0091b8"/><stop offset="1.000" stop-color="#0091b8"/></linearGradient><linearGradient id="f17" x1="0" y1="0" x2="0" y2="1"><stop offset="0.000" stop-color="#0083af"/><stop offset="0.200" stop-color="#0083af"/><stop offset="0.209" stop-color="#007baa"/><stop offset="0.255" stop-color="#007baa"/><stop offset="0.270" stop-color="#0074a6"/><stop offset="0.295" stop-color="#0074a6"/><stop offset="0.310" stop-color="#006da1"/><stop offset="0.356" stop-color="#005894"/><stop offset="0.380" stop-color="#003c82"/><stop offset="0.407" stop-color="#01015d"/><stop offset="0.431" stop-color="#1a1a8a"/><stop offset="0.453" stop-color="#3939c2"/><stop offset="0.455" stop-color="#4747db"/><stop offset="0.525" stop-color="#4747db"/><stop offset="0.527" stop-color="#3737bf"/><stop offset="0.567" stop-color="#030360"/><stop offset="0.574" stop-color="#000b62"/><stop offset="0.587" stop-color="#00357d"/><stop offset="0.622" stop-color="#00669d"/><stop offset="0.690" stop-color="#008ab3"/><stop offset="0.727" stop-color="#0098bd"/><stop offset="0.804" stop-color="#009fc1"/><stop offset="0.921" stop-color="#009fc1"/><stop offset="0.934" stop-color="#0098bd"/><stop offset="0.978" stop-color="#0091b8"/><stop offset="1.000" stop-color="#0091b8"/></linearGradient><linearGradient id="f18" x1="0" y1="0" x2="0" y2="1"><stop offset="0.000" stop-color="#0083af"/><stop offset="0.200" stop-color="#0083af"/><stop offset="0.209" stop-color="#007baa"/><stop offset="0.255" stop-color="#007baa"/><stop offset="0.270" stop-color="#0074a6"/><stop offset="0.312" stop-color="#006da1"/><stop offset="0.327" stop-color="#00669d"/><stop offset="0.356" stop-color="#005894"/><stop offset="0.382" stop-color="#00357d"/><stop offset="0.402" stop-color="#000b62"/><stop offset="0.411" stop-color="#030360"/><stop offset="0.442" stop-color="#2a2aa6"/><stop offset="0.455" stop-color="#3737bf"/><stop offset="0.527" stop-color="#3636bc"/><stop offset="0.569" stop-color="#00025d"/><stop offset="0.591" stop-color="#003c82"/><stop offset="0.624" stop-color="#00669d"/><stop offset="0.666" stop-color="#007baa"/><stop offset="0.675" stop-color="#0083af"/><stop offset="0.725" stop-color="#0098bd"/><stop offset="0.818" stop-color="#009fc1"/><stop offset="0.921" stop-color="#009fc1"/><stop offset="0.934" stop-color="#0098bd"/><stop offset="0.978" stop-color="#0091b8"/><stop offset="1.000" stop-color="#0091b8"/></linearGradient><linearGradient id="f19" x1="0" y1="0" x2="0" y2="1"><stop offset="0.000" stop-color="#0083af"/><stop offset="0.200" stop-color="#0083af"/><stop offset="0.209" stop-color="#007baa"/><stop offset="0.255" stop-color="#007baa"/><stop offset="0.270" stop-color="#0074a6"/><stop offset="0.310" stop-color="#006da1"/><stop offset="0.325" stop-color="#00669d"/><stop offset="0.356" stop-color="#005894"/><stop offset="0.387" stop-color="#002e79"/><stop offset="0.409" stop-color="#01015d"/><stop offset="0.433" stop-color="#1a1a8a"/><stop offset="0.451" stop-color="#2e2ead"/><stop offset="0.532" stop-color="#2c2ca9"/><stop offset="0.567" stop-color="#01025d"/><stop offset="0.589" stop-color="#003b81"/><stop offset="0.629" stop-color="#006da1"/><stop offset="0.666" stop-color="#007baa"/><stop offset="0.675" stop-color="#0083af"/><stop offset="0.725" stop-color="#0098bd"/><stop offset="0.818" stop-color="#009fc1"/><stop offset="0.921" stop-color="#009fc1"/><stop offset="0.934" stop-color="#0098bd"/><stop offset="0.978" stop-color="#0091b8"/><stop offset="1.000" stop-color="#0091b8"/></linearGradient><linearGradient id="f20" x1="0" y1="0" x2="0" y2="1"><stop offset="0.000" stop-color="#0083af"/><stop offset="0.202" stop-color="#0083af"/><stop offset="0.211" stop-color="#007baa"/><stop offset="0.257" stop-color="#0076a7"/><stop offset="0.310" stop-color="#006ba0"/><stop offset="0.349" stop-color="#005f98"/><stop offset="0.387" stop-color="#00327b"/><stop offset="0.413" stop-color="#02025e"/><stop offset="0.442" stop-color="#1e1e92"/><stop offset="0.457" stop-color="#26269f"/><stop offset="0.532" stop-color="#24249c"/><stop offset="0.565" stop-color="#00035d"/><stop offset="0.587" stop-color="#003b81"/><stop offset="0.626" stop-color="#006da1"/><stop offset="0.664" stop-color="#007baa"/><stop offset="0.673" stop-color="#0083af"/><stop offset="0.727" stop-color="#0098bd"/><stop offset="0.804" stop-color="#009fc1"/><stop offset="0.921" stop-color="#009fc1"/><stop offset="0.934" stop-color="#0098bd"/><stop offset="0.978" stop-color="#0091b8"/><stop offset="1.000" stop-color="#0091b8"/></linearGradient><linearGradient id="f21" x1="0" y1="0" x2="0" y2="1"><stop offset="0.000" stop-color="#0083af"/><stop offset="0.204" stop-color="#007eac"/><stop offset="0.255" stop-color="#0079a9"/><stop offset="0.288" stop-color="#0074a6"/><stop offset="0.303" stop-color="#006da1"/><stop offset="0.358" stop-color="#005894"/><stop offset="0.391" stop-color="#002e79"/><stop offset="0.418" stop-color="#02025e"/><stop offset="0.455" stop-color="#1d1d90"/><stop offset="0.530" stop-color="#1c1c8d"/><stop offset="0.558" stop-color="#01025e"/><stop offset="0.589" stop-color="#004386"/><stop offset="0.624" stop-color="#006da1"/><stop offset="0.725" stop-color="#0098bd"/><stop offset="0.818" stop-color="#009fc1"/><stop offset="0.921" stop-color="#009fc1"/><stop offset="0.934" stop-color="#0098bd"/><stop offset="0.978" stop-color="#0091b8"/><stop offset="1.000" stop-color="#0091b8"/></linearGradient><linearGradient id="f22" x1="0" y1="0" x2="0" y2="1"><stop offset="0.000" stop-color="#0083af"/><stop offset="0.207" stop-color="#007eac"/><stop offset="0.253" stop-color="#007aa9"/><stop offset="0.286" stop-color="#0074a6"/><stop offset="0.301" stop-color="#006da1"/><stop offset="0.367" stop-color="#00518f"/><stop offset="0.411" stop-color="#001668"/><stop offset="0.426" stop-color="#030360"/><stop offset="0.462" stop-color="#141480"/><stop offset="0.527" stop-color="#11117a"/><stop offset="0.554" stop-color="#00065f"/><stop offset="0.585" stop-color="#004487"/><stop offset="0.613" stop-color="#00669d"/><stop offset="0.684" stop-color="#008ab3"/><stop offset="0.730" stop-color="#0098bd"/><stop offset="0.791" stop-color="#009fc1"/><stop offset="0.921" stop-color="#009fc1"/><stop offset="0.934" stop-color="#0098bd"/><stop offset="0.978" stop-color="#0091b8"/><stop offset="1.000" stop-color="#0091b8"/></linearGradient><linearGradient id="f23" x1="0" y1="0" x2="0" y2="1"><stop offset="0.000" stop-color="#0083af"/><stop offset="0.209" stop-color="#007fac"/><stop offset="0.251" stop-color="#007baa"/><stop offset="0.266" stop-color="#0074a6"/><stop offset="0.310" stop-color="#006da1"/><stop offset="0.325" stop-color="#00669d"/><stop offset="0.369" stop-color="#00518f"/><stop offset="0.435" stop-color="#02035f"/><stop offset="0.479" stop-color="#0f0f75"/><stop offset="0.523" stop-color="#0a0a6c"/><stop offset="0.543" stop-color="#00055f"/><stop offset="0.589" stop-color="#005290"/><stop offset="0.620" stop-color="#006da1"/><stop offset="0.684" stop-color="#008ab3"/><stop offset="0.725" stop-color="#0098bd"/><stop offset="0.802" stop-color="#009fc1"/><stop offset="0.921" stop-color="#009fc1"/><stop offset="0.934" stop-color="#0098bd"/><stop offset="0.978" stop-color="#0091b8"/><stop offset="1.000" stop-color="#0091b8"/></linearGradient><linearGradient id="f24" x1="0" y1="0" x2="0" y2="1"><stop offset="0.000" stop-color="#0083af"/><stop offset="0.211" stop-color="#0082ae"/><stop offset="0.284" stop-color="#0074a6"/><stop offset="0.299" stop-color="#006da1"/><stop offset="0.378" stop-color="#004a8b"/><stop offset="0.448" stop-color="#02035f"/><stop offset="0.499" stop-color="#070768"/><stop offset="0.530" stop-color="#000860"/><stop offset="0.600" stop-color="#00669d"/><stop offset="0.679" stop-color="#008ab3"/><stop offset="0.725" stop-color="#0098bd"/><stop offset="0.787" stop-color="#009fc1"/><stop offset="0.921" stop-color="#009fc1"/><stop offset="0.934" stop-color="#0098bd"/><stop offset="0.978" stop-color="#0091b8"/><stop offset="1.000" stop-color="#0091b8"/></linearGradient><linearGradient id="f25" x1="0" y1="0" x2="0" y2="1"><stop offset="0.000" stop-color="#0083af"/><stop offset="0.213" stop-color="#007eac"/><stop offset="0.248" stop-color="#007baa"/><stop offset="0.264" stop-color="#0074a6"/><stop offset="0.310" stop-color="#006da1"/><stop offset="0.338" stop-color="#005f98"/><stop offset="0.398" stop-color="#003b81"/><stop offset="0.464" stop-color="#01045e"/><stop offset="0.514" stop-color="#000b62"/><stop offset="0.576" stop-color="#00518f"/><stop offset="0.631" stop-color="#007baa"/><stop offset="0.719" stop-color="#0098bd"/><stop offset="0.811" stop-color="#009fc1"/><stop offset="0.921" stop-color="#009fc1"/><stop offset="0.934" stop-color="#0098bd"/><stop offset="0.978" stop-color="#0091b8"/><stop offset="1.000" stop-color="#0091b8"/></linearGradient><linearGradient id="f26" x1="0" y1="0" x2="0" y2="1"><stop offset="0.000" stop-color="#0083af"/><stop offset="0.211" stop-color="#0083af"/><stop offset="0.220" stop-color="#007baa"/><stop offset="0.248" stop-color="#007baa"/><stop offset="0.264" stop-color="#0074a6"/><stop offset="0.281" stop-color="#0074a6"/><stop offset="0.297" stop-color="#006da1"/><stop offset="0.369" stop-color="#004f8e"/><stop offset="0.473" stop-color="#000d63"/><stop offset="0.521" stop-color="#001b6d"/><stop offset="0.604" stop-color="#006da1"/><stop offset="0.637" stop-color="#007baa"/><stop offset="0.646" stop-color="#0083af"/><stop offset="0.662" stop-color="#0083af"/><stop offset="0.677" stop-color="#008ab3"/><stop offset="0.714" stop-color="#0098bd"/><stop offset="0.807" stop-color="#009fc1"/><stop offset="0.921" stop-color="#009fc1"/><stop offset="0.934" stop-color="#0098bd"/><stop offset="0.978" stop-color="#0091b8"/><stop offset="1.000" stop-color="#0091b8"/></linearGradient><linearGradient id="f27" x1="0" y1="0" x2="0" y2="1"><stop offset="0.000" stop-color="#0083af"/><stop offset="0.211" stop-color="#007eac"/><stop offset="0.308" stop-color="#006da1"/><stop offset="0.323" stop-color="#00669d"/><stop offset="0.470" stop-color="#00186a"/><stop offset="0.519" stop-color="#002271"/><stop offset="0.587" stop-color="#00619a"/><stop offset="0.615" stop-color="#0074a6"/><stop offset="0.637" stop-color="#007baa"/><stop offset="0.646" stop-color="#0083af"/><stop offset="0.679" stop-color="#008ab3"/><stop offset="0.705" stop-color="#0098bd"/><stop offset="0.813" stop-color="#009fc1"/><stop offset="0.921" stop-color="#009fc1"/><stop offset="0.934" stop-color="#0098bd"/><stop offset="0.978" stop-color="#0091b8"/><stop offset="1.000" stop-color="#0091b8"/></linearGradient><linearGradient id="f28" x1="0" y1="0" x2="0" y2="1"><stop offset="0.000" stop-color="#0083af"/><stop offset="0.209" stop-color="#0083af"/><stop offset="0.218" stop-color="#007baa"/><stop offset="0.251" stop-color="#007baa"/><stop offset="0.266" stop-color="#0074a6"/><stop offset="0.327" stop-color="#00669d"/><stop offset="0.400" stop-color="#003c82"/><stop offset="0.484" stop-color="#00196b"/><stop offset="0.514" stop-color="#002070"/><stop offset="0.571" stop-color="#005492"/><stop offset="0.602" stop-color="#006da1"/><stop offset="0.635" stop-color="#007baa"/><stop offset="0.727" stop-color="#009fc1"/><stop offset="0.921" stop-color="#009fc1"/><stop offset="0.934" stop-color="#0098bd"/><stop offset="0.978" stop-color="#0091b8"/><stop offset="1.000" stop-color="#0091b8"/></linearGradient><linearGradient id="f29" x1="0" y1="0" x2="0" y2="1"><stop offset="0.000" stop-color="#0083af"/><stop offset="0.209" stop-color="#0083af"/><stop offset="0.218" stop-color="#007baa"/><stop offset="0.251" stop-color="#007baa"/><stop offset="0.266" stop-color="#0074a6"/><stop offset="0.327" stop-color="#00669d"/><stop offset="0.400" stop-color="#003c82"/><stop offset="0.484" stop-color="#00196b"/><stop offset="0.525" stop-color="#002774"/><stop offset="0.591" stop-color="#00669d"/><stop offset="0.631" stop-color="#007baa"/><stop offset="0.730" stop-color="#009fc1"/><stop offset="0.921" stop-color="#009fc1"/><stop offset="0.934" stop-color="#0098bd"/><stop offset="0.978" stop-color="#0091b8"/><stop offset="1.000" stop-color="#0091b8"/></linearGradient><linearGradient id="f30" x1="0" y1="0" x2="0" y2="1"><stop offset="0.000" stop-color="#0083af"/><stop offset="0.211" stop-color="#007fac"/><stop offset="0.281" stop-color="#0074a6"/><stop offset="0.297" stop-color="#006da1"/><stop offset="0.354" stop-color="#005894"/><stop offset="0.466" stop-color="#001769"/><stop offset="0.516" stop-color="#001f6f"/><stop offset="0.611" stop-color="#0074a6"/><stop offset="0.637" stop-color="#007baa"/><stop offset="0.646" stop-color="#0083af"/><stop offset="0.679" stop-color="#008ab3"/><stop offset="0.705" stop-color="#0098bd"/><stop offset="0.829" stop-color="#009fc1"/><stop offset="0.921" stop-color="#009fc1"/><stop offset="0.934" stop-color="#0098bd"/><stop offset="0.978" stop-color="#0091b8"/><stop offset="1.000" stop-color="#0091b8"/></linearGradient><linearGradient id="f31" x1="0" y1="0" x2="0" y2="1"><stop offset="0.000" stop-color="#0083af"/><stop offset="0.211" stop-color="#0083af"/><stop offset="0.220" stop-color="#007baa"/><stop offset="0.248" stop-color="#007baa"/><stop offset="0.264" stop-color="#0074a6"/><stop offset="0.281" stop-color="#0074a6"/><stop offset="0.297" stop-color="#006da1"/><stop offset="0.369" stop-color="#00508e"/><stop offset="0.473" stop-color="#000a61"/><stop offset="0.523" stop-color="#001b6d"/><stop offset="0.604" stop-color="#006da1"/><stop offset="0.637" stop-color="#007baa"/><stop offset="0.646" stop-color="#0083af"/><stop offset="0.662" stop-color="#0083af"/><stop offset="0.677" stop-color="#008ab3"/><stop offset="0.714" stop-color="#0098bd"/><stop offset="0.807" stop-color="#009fc1"/><stop offset="0.921" stop-color="#009fc1"/><stop offset="0.934" stop-color="#0098bd"/><stop offset="0.978" stop-color="#0091b8"/><stop offset="1.000" stop-color="#0091b8"/></linearGradient><linearGradient id="f32" x1="0" y1="0" x2="0" y2="1"><stop offset="0.000" stop-color="#0083af"/><stop offset="0.213" stop-color="#007fac"/><stop offset="0.248" stop-color="#007baa"/><stop offset="0.264" stop-color="#0074a6"/><stop offset="0.284" stop-color="#0074a6"/><stop offset="0.299" stop-color="#006da1"/><stop offset="0.382" stop-color="#004889"/><stop offset="0.459" stop-color="#01045e"/><stop offset="0.516" stop-color="#000961"/><stop offset="0.598" stop-color="#00669d"/><stop offset="0.657" stop-color="#0083af"/><stop offset="0.721" stop-color="#0098bd"/><stop offset="0.798" stop-color="#009fc1"/><stop offset="0.921" stop-color="#009fc1"/><stop offset="0.934" stop-color="#0098bd"/><stop offset="0.978" stop-color="#0091b8"/><stop offset="1.000" stop-color="#0091b8"/></linearGradient><linearGradient id="f33" x1="0" y1="0" x2="0" y2="1"><stop offset="0.000" stop-color="#0083af"/><stop offset="0.211" stop-color="#0080ad"/><stop offset="0.251" stop-color="#007baa"/><stop offset="0.266" stop-color="#0074a6"/><stop offset="0.284" stop-color="#0074a6"/><stop offset="0.299" stop-color="#006da1"/><stop offset="0.371" stop-color="#00508e"/><stop offset="0.444" stop-color="#01035e"/><stop offset="0.497" stop-color="#0a0a6c"/><stop offset="0.534" stop-color="#000860"/><stop offset="0.602" stop-color="#00669d"/><stop offset="0.681" stop-color="#008ab3"/><stop offset="0.723" stop-color="#0098bd"/><stop offset="0.800" stop-color="#009fc1"/><stop offset="0.921" stop-color="#009fc1"/><stop offset="0.934" stop-color="#0098bd"/><stop offset="0.978" stop-color="#0091b8"/><stop offset="1.000" stop-color="#0091b8"/></linearGradient><linearGradient id="f34" x1="0" y1="0" x2="0" y2="1"><stop offset="0.000" stop-color="#0083af"/><stop offset="0.209" stop-color="#007eac"/><stop offset="0.251" stop-color="#007baa"/><stop offset="0.266" stop-color="#0074a6"/><stop offset="0.310" stop-color="#006da1"/><stop offset="0.325" stop-color="#00669d"/><stop offset="0.369" stop-color="#00508e"/><stop offset="0.420" stop-color="#001166"/><stop offset="0.435" stop-color="#030360"/><stop offset="0.475" stop-color="#101078"/><stop offset="0.523" stop-color="#0c0c70"/><stop offset="0.547" stop-color="#000860"/><stop offset="0.587" stop-color="#004e8d"/><stop offset="0.620" stop-color="#006da1"/><stop offset="0.686" stop-color="#008ab3"/><stop offset="0.727" stop-color="#0098bd"/><stop offset="0.789" stop-color="#009fc1"/><stop offset="0.921" stop-color="#009fc1"/><stop offset="0.934" stop-color="#0098bd"/><stop offset="0.978" stop-color="#0091b8"/><stop offset="1.000" stop-color="#0091b8"/></linearGradient><linearGradient id="f35" x1="0" y1="0" x2="0" y2="1"><stop offset="0.000" stop-color="#0083af"/><stop offset="0.204" stop-color="#0083af"/><stop offset="0.222" stop-color="#007baa"/><stop offset="0.253" stop-color="#007baa"/><stop offset="0.268" stop-color="#0074a6"/><stop offset="0.330" stop-color="#00629a"/><stop offset="0.367" stop-color="#00518f"/><stop offset="0.411" stop-color="#001367"/><stop offset="0.424" stop-color="#030360"/><stop offset="0.459" stop-color="#161683"/><stop offset="0.527" stop-color="#14147e"/><stop offset="0.554" stop-color="#00045e"/><stop offset="0.587" stop-color="#004588"/><stop offset="0.622" stop-color="#006da1"/><stop offset="0.723" stop-color="#0098bd"/><stop offset="0.831" stop-color="#009fc1"/><stop offset="0.921" stop-color="#009fc1"/><stop offset="0.934" stop-color="#0098bd"/><stop offset="0.978" stop-color="#0091b8"/><stop offset="1.000" stop-color="#0091b8"/></linearGradient><linearGradient id="f36" x1="0" y1="0" x2="0" y2="1"><stop offset="0.000" stop-color="#0083af"/><stop offset="0.202" stop-color="#0083af"/><stop offset="0.220" stop-color="#007baa"/><stop offset="0.255" stop-color="#007aa9"/><stop offset="0.288" stop-color="#0074a6"/><stop offset="0.303" stop-color="#006da1"/><stop offset="0.349" stop-color="#005f98"/><stop offset="0.391" stop-color="#002e79"/><stop offset="0.415" stop-color="#01025e"/><stop offset="0.455" stop-color="#1f1f93"/><stop offset="0.532" stop-color="#1d1d90"/><stop offset="0.560" stop-color="#00045e"/><stop offset="0.589" stop-color="#004386"/><stop offset="0.626" stop-color="#006da1"/><stop offset="0.708" stop-color="#0091b8"/><stop offset="0.760" stop-color="#009fc1"/><stop offset="0.921" stop-color="#009fc1"/><stop offset="0.934" stop-color="#0098bd"/><stop offset="0.978" stop-color="#0091b8"/><stop offset="1.000" stop-color="#0091b8"/></linearGradient><linearGradient id="f37" x1="0" y1="0" x2="0" y2="1"><stop offset="0.000" stop-color="#0083af"/><stop offset="0.202" stop-color="#0080ad"/><stop offset="0.257" stop-color="#0076a7"/><stop offset="0.290" stop-color="#0074a6"/><stop offset="0.305" stop-color="#006da1"/><stop offset="0.356" stop-color="#005894"/><stop offset="0.389" stop-color="#002e79"/><stop offset="0.411" stop-color="#01025d"/><stop offset="0.437" stop-color="#1a1a8b"/><stop offset="0.453" stop-color="#2828a2"/><stop offset="0.532" stop-color="#26269f"/><stop offset="0.565" stop-color="#00025d"/><stop offset="0.587" stop-color="#003a80"/><stop offset="0.626" stop-color="#006da1"/><stop offset="0.725" stop-color="#0098bd"/><stop offset="0.818" stop-color="#009fc1"/><stop offset="0.921" stop-color="#009fc1"/><stop offset="0.934" stop-color="#0098bd"/><stop offset="0.978" stop-color="#0091b8"/><stop offset="1.000" stop-color="#0091b8"/></linearGradient><linearGradient id="f38" x1="0" y1="0" x2="0" y2="1"><stop offset="0.000" stop-color="#0083af"/><stop offset="0.200" stop-color="#0083af"/><stop offset="0.209" stop-color="#007baa"/><stop offset="0.255" stop-color="#007baa"/><stop offset="0.270" stop-color="#0074a6"/><stop offset="0.310" stop-color="#006da1"/><stop offset="0.356" stop-color="#005894"/><stop offset="0.387" stop-color="#002e79"/><stop offset="0.409" stop-color="#01015d"/><stop offset="0.433" stop-color="#1a1a8b"/><stop offset="0.451" stop-color="#3030b1"/><stop offset="0.532" stop-color="#2d2dac"/><stop offset="0.567" stop-color="#01025d"/><stop offset="0.593" stop-color="#004285"/><stop offset="0.631" stop-color="#006da1"/><stop offset="0.666" stop-color="#007baa"/><stop offset="0.675" stop-color="#0083af"/><stop offset="0.725" stop-color="#0098bd"/><stop offset="0.818" stop-color="#009fc1"/><stop offset="0.921" stop-color="#009fc1"/><stop offset="0.934" stop-color="#0098bd"/><stop offset="0.978" stop-color="#0091b8"/><stop offset="1.000" stop-color="#0091b8"/></linearGradient><linearGradient id="f39" x1="0" y1="0" x2="0" y2="1"><stop offset="0.000" stop-color="#0083af"/><stop offset="0.200" stop-color="#0083af"/><stop offset="0.209" stop-color="#007baa"/><stop offset="0.255" stop-color="#007baa"/><stop offset="0.270" stop-color="#0074a6"/><stop offset="0.312" stop-color="#006da1"/><stop offset="0.356" stop-color="#005894"/><stop offset="0.382" stop-color="#00357d"/><stop offset="0.402" stop-color="#000b62"/><stop offset="0.411" stop-color="#030360"/><stop offset="0.444" stop-color="#2e2eac"/><stop offset="0.457" stop-color="#3c3cc8"/><stop offset="0.525" stop-color="#3c3cc8"/><stop offset="0.565" stop-color="#050564"/><stop offset="0.571" stop-color="#00055e"/><stop offset="0.591" stop-color="#003c82"/><stop offset="0.624" stop-color="#00669d"/><stop offset="0.666" stop-color="#007baa"/><stop offset="0.675" stop-color="#0083af"/><stop offset="0.725" stop-color="#0098bd"/><stop offset="0.818" stop-color="#009fc1"/><stop offset="0.921" stop-color="#009fc1"/><stop offset="0.934" stop-color="#0098bd"/><stop offset="0.978" stop-color="#0091b8"/><stop offset="1.000" stop-color="#0091b8"/></linearGradient><linearGradient id="f40" x1="0" y1="0" x2="0" y2="1"><stop offset="0.000" stop-color="#0083af"/><stop offset="0.200" stop-color="#0083af"/><stop offset="0.209" stop-color="#007baa"/><stop offset="0.255" stop-color="#007baa"/><stop offset="0.270" stop-color="#0074a6"/><stop offset="0.295" stop-color="#0074a6"/><stop offset="0.310" stop-color="#006da1"/><stop offset="0.356" stop-color="#005894"/><stop offset="0.380" stop-color="#003c82"/><stop offset="0.407" stop-color="#01015d"/><stop offset="0.429" stop-color="#161683"/><stop offset="0.453" stop-color="#3939c2"/><stop offset="0.455" stop-color="#4747db"/><stop offset="0.525" stop-color="#4747db"/><stop offset="0.527" stop-color="#3737bf"/><stop offset="0.567" stop-color="#030360"/><stop offset="0.574" stop-color="#000b62"/><stop offset="0.587" stop-color="#00357d"/><stop offset="0.622" stop-color="#00669d"/><stop offset="0.690" stop-color="#008ab3"/><stop offset="0.727" stop-color="#0098bd"/><stop offset="0.804" stop-color="#009fc1"/><stop offset="0.921" stop-color="#009fc1"/><stop offset="0.934" stop-color="#0098bd"/><stop offset="0.978" stop-color="#0091b8"/><stop offset="1.000" stop-color="#0091b8"/></linearGradient><linearGradient id="f41" x1="0" y1="0" x2="0" y2="1"><stop offset="0.000" stop-color="#0083af"/><stop offset="0.200" stop-color="#0083af"/><stop offset="0.209" stop-color="#007baa"/><stop offset="0.255" stop-color="#007baa"/><stop offset="0.270" stop-color="#0074a6"/><stop offset="0.295" stop-color="#0074a6"/><stop offset="0.310" stop-color="#006da1"/><stop offset="0.358" stop-color="#005894"/><stop offset="0.391" stop-color="#002774"/><stop offset="0.407" stop-color="#00045d"/><stop offset="0.429" stop-color="#161683"/><stop offset="0.453" stop-color="#3939c2"/><stop offset="0.455" stop-color="#4747db"/><stop offset="0.525" stop-color="#4747db"/><stop offset="0.527" stop-color="#3737bf"/><stop offset="0.567" stop-color="#030360"/><stop offset="0.574" stop-color="#000b62"/><stop offset="0.587" stop-color="#00357d"/><stop offset="0.622" stop-color="#00669d"/><stop offset="0.664" stop-color="#007baa"/><stop offset="0.673" stop-color="#0083af"/><stop offset="0.727" stop-color="#0098bd"/><stop offset="0.789" stop-color="#009fc1"/><stop offset="0.921" stop-color="#009fc1"/><stop offset="0.934" stop-color="#0098bd"/><stop offset="0.978" stop-color="#0091b8"/><stop offset="1.000" stop-color="#0091b8"/></linearGradient><linearGradient id="f42" x1="0" y1="0" x2="0" y2="1"><stop offset="0.000" stop-color="#0083af"/><stop offset="0.200" stop-color="#0083af"/><stop offset="0.209" stop-color="#007baa"/><stop offset="0.255" stop-color="#007baa"/><stop offset="0.270" stop-color="#0074a6"/><stop offset="0.295" stop-color="#0074a6"/><stop offset="0.310" stop-color="#006da1"/><stop offset="0.341" stop-color="#00669d"/><stop offset="0.376" stop-color="#004386"/><stop offset="0.398" stop-color="#00196b"/><stop offset="0.409" stop-color="#01015d"/><stop offset="0.431" stop-color="#1a1a8a"/><stop offset="0.453" stop-color="#3939c2"/><stop offset="0.455" stop-color="#4747db"/><stop offset="0.525" stop-color="#4747db"/><stop offset="0.527" stop-color="#3737bf"/><stop offset="0.567" stop-color="#030360"/><stop offset="0.574" stop-color="#000b62"/><stop offset="0.587" stop-color="#00357d"/><stop offset="0.622" stop-color="#00669d"/><stop offset="0.664" stop-color="#007baa"/><stop offset="0.673" stop-color="#0083af"/><stop offset="0.723" stop-color="#0098bd"/><stop offset="0.815" stop-color="#009fc1"/><stop offset="0.921" stop-color="#009fc1"/><stop offset="0.934" stop-color="#0098bd"/><stop offset="0.978" stop-color="#0091b8"/><stop offset="1.000" stop-color="#0091b8"/></linearGradient><linearGradient id="f43" x1="0" y1="0" x2="0" y2="1"><stop offset="0.000" stop-color="#0083af"/><stop offset="0.200" stop-color="#0083af"/><stop offset="0.209" stop-color="#007baa"/><stop offset="0.255" stop-color="#007baa"/><stop offset="0.270" stop-color="#0074a6"/><stop offset="0.295" stop-color="#0074a6"/><stop offset="0.310" stop-color="#006da1"/><stop offset="0.341" stop-color="#00669d"/><stop offset="0.378" stop-color="#004386"/><stop offset="0.398" stop-color="#00196b"/><stop offset="0.409" stop-color="#01015d"/><stop offset="0.431" stop-color="#1a1a8a"/><stop offset="0.453" stop-color="#3939c2"/><stop offset="0.455" stop-color="#4747db"/><stop offset="0.525" stop-color="#4747db"/><stop offset="0.527" stop-color="#3737bf"/><stop offset="0.567" stop-color="#030360"/><stop offset="0.574" stop-color="#000b62"/><stop offset="0.587" stop-color="#00357d"/><stop offset="0.622" stop-color="#00669d"/><stop offset="0.688" stop-color="#008ab3"/><stop offset="0.725" stop-color="#0098bd"/><stop offset="0.802" stop-color="#009fc1"/><stop offset="0.921" stop-color="#009fc1"/><stop offset="0.934" stop-color="#0098bd"/><stop offset="0.978" stop-color="#0091b8"/><stop offset="1.000" stop-color="#0091b8"/></linearGradient><linearGradient id="f44" x1="0" y1="0" x2="0" y2="1"><stop offset="0.000" stop-color="#0083af"/><stop offset="0.200" stop-color="#0083af"/><stop offset="0.209" stop-color="#007baa"/><stop offset="0.255" stop-color="#007baa"/><stop offset="0.270" stop-color="#0074a6"/><stop offset="0.295" stop-color="#0074a6"/><stop offset="0.310" stop-color="#006da1"/><stop offset="0.341" stop-color="#00669d"/><stop offset="0.378" stop-color="#004386"/><stop offset="0.398" stop-color="#00196b"/><stop offset="0.409" stop-color="#01015d"/><stop offset="0.429" stop-color="#161683"/><stop offset="0.453" stop-color="#3939c2"/><stop offset="0.455" stop-color="#4747db"/><stop offset="0.525" stop-color="#4747db"/><stop offset="0.527" stop-color="#3737bf"/><stop offset="0.567" stop-color="#030360"/><stop offset="0.574" stop-color="#000b62"/><stop offset="0.587" stop-color="#00357d"/><stop offset="0.622" stop-color="#00669d"/><stop offset="0.681" stop-color="#008ab3"/><stop offset="0.723" stop-color="#0098bd"/><stop offset="0.785" stop-color="#009fc1"/><stop offset="0.921" stop-color="#009fc1"/><stop offset="0.934" stop-color="#0098bd"/><stop offset="0.978" stop-color="#0091b8"/><stop offset="1.000" stop-color="#0091b8"/></linearGradient><linearGradient id="f45" x1="0" y1="0" x2="0" y2="1"><stop offset="0.000" stop-color="#0083af"/><stop offset="0.200" stop-color="#0083af"/><stop offset="0.209" stop-color="#007baa"/><stop offset="0.255" stop-color="#007baa"/><stop offset="0.270" stop-color="#0074a6"/><stop offset="0.295" stop-color="#0074a6"/><stop offset="0.310" stop-color="#006da1"/><stop offset="0.341" stop-color="#00669d"/><stop offset="0.378" stop-color="#004386"/><stop offset="0.398" stop-color="#00196b"/><stop offset="0.409" stop-color="#01015d"/><stop offset="0.429" stop-color="#161683"/><stop offset="0.453" stop-color="#3939c2"/><stop offset="0.455" stop-color="#4747db"/><stop offset="0.525" stop-color="#4747db"/><stop offset="0.527" stop-color="#3737bf"/><stop offset="0.567" stop-color="#030360"/><stop offset="0.574" stop-color="#000b62"/><stop offset="0.587" stop-color="#00357d"/><stop offset="0.626" stop-color="#006da1"/><stop offset="0.708" stop-color="#0098bd"/><stop offset="0.846" stop-color="#009fc1"/><stop offset="0.921" stop-color="#009fc1"/><stop offset="0.934" stop-color="#0098bd"/><stop offset="1.000" stop-color="#0091b8"/></linearGradient><linearGradient id="f46" x1="0" y1="0" x2="0" y2="1"><stop offset="0.000" stop-color="#0083af"/><stop offset="0.200" stop-color="#0083af"/><stop offset="0.209" stop-color="#007baa"/><stop offset="0.255" stop-color="#007baa"/><stop offset="0.270" stop-color="#0074a6"/><stop offset="0.295" stop-color="#0074a6"/><stop offset="0.310" stop-color="#006da1"/><stop offset="0.341" stop-color="#00669d"/><stop offset="0.378" stop-color="#004386"/><stop offset="0.398" stop-color="#00196b"/><stop offset="0.409" stop-color="#01015d"/><stop offset="0.429" stop-color="#161683"/><stop offset="0.453" stop-color="#3939c2"/><stop offset="0.455" stop-color="#4747db"/><stop offset="0.525" stop-color="#4747db"/><stop offset="0.527" stop-color="#3737bf"/><stop offset="0.567" stop-color="#030360"/><stop offset="0.574" stop-color="#000b62"/><stop offset="0.587" stop-color="#00357d"/><stop offset="0.624" stop-color="#006da1"/><stop offset="0.686" stop-color="#0091b8"/><stop offset="0.743" stop-color="#009fc1"/><stop offset="0.923" stop-color="#009dc0"/><stop offset="1.000" stop-color="#0093ba"/></linearGradient><linearGradient id="f47" x1="0" y1="0" x2="0" y2="1"><stop offset="0.000" stop-color="#0083af"/><stop offset="0.200" stop-color="#0083af"/><stop offset="0.209" stop-color="#007baa"/><stop offset="0.255" stop-color="#007baa"/><stop offset="0.270" stop-color="#0074a6"/><stop offset="0.295" stop-color="#0074a6"/><stop offset="0.310" stop-color="#006da1"/><stop offset="0.341" stop-color="#00669d"/><stop offset="0.378" stop-color="#004386"/><stop offset="0.398" stop-color="#00196b"/><stop offset="0.409" stop-color="#01015d"/><stop offset="0.429" stop-color="#161683"/><stop offset="0.453" stop-color="#3939c2"/><stop offset="0.455" stop-color="#4747db"/><stop offset="0.525" stop-color="#4747db"/><stop offset="0.527" stop-color="#3737bf"/><stop offset="0.567" stop-color="#030360"/><stop offset="0.574" stop-color="#000b62"/><stop offset="0.587" stop-color="#00357d"/><stop offset="0.618" stop-color="#00669d"/><stop offset="0.664" stop-color="#008ab3"/><stop offset="0.725" stop-color="#009fc1"/><stop offset="0.932" stop-color="#0099be"/><stop offset="1.000" stop-color="#0098bd"/></linearGradient><linearGradient id="f48" x1="0" y1="0" x2="0" y2="1"><stop offset="0.000" stop-color="#0083af"/><stop offset="0.200" stop-color="#0083af"/><stop offset="0.209" stop-color="#007baa"/><stop offset="0.255" stop-color="#007baa"/><stop offset="0.270" stop-color="#0074a6"/><stop offset="0.295" stop-color="#0074a6"/><stop offset="0.310" stop-color="#006da1"/><stop offset="0.341" stop-color="#00669d"/><stop offset="0.378" stop-color="#004386"/><stop offset="0.398" stop-color="#00196b"/><stop offset="0.409" stop-color="#01015d"/><stop offset="0.429" stop-color="#161683"/><stop offset="0.453" stop-color="#3939c2"/><stop offset="0.455" stop-color="#4747db"/><stop offset="0.525" stop-color="#4747db"/><stop offset="0.527" stop-color="#3737bf"/><stop offset="0.567" stop-color="#030360"/><stop offset="0.574" stop-color="#000b62"/><stop offset="0.587" stop-color="#00357d"/><stop offset="0.622" stop-color="#006da1"/><stop offset="0.659" stop-color="#008ab3"/><stop offset="0.716" stop-color="#009fc1"/><stop offset="1.000" stop-color="#009fc1"/></linearGradient><linearGradient id="f49" x1="0" y1="0" x2="0" y2="1"><stop offset="0.000" stop-color="#0083af"/><stop offset="0.200" stop-color="#0083af"/><stop offset="0.209" stop-color="#007baa"/><stop offset="0.255" stop-color="#007baa"/><stop offset="0.270" stop-color="#0074a6"/><stop offset="0.295" stop-color="#0074a6"/><stop offset="0.310" stop-color="#006da1"/><stop offset="0.341" stop-color="#00669d"/><stop offset="0.378" stop-color="#004386"/><stop offset="0.398" stop-color="#00196b"/><stop offset="0.409" stop-color="#01015d"/><stop offset="0.429" stop-color="#161683"/><stop offset="0.453" stop-color="#3939c2"/><stop offset="0.455" stop-color="#4747db"/><stop offset="0.525" stop-color="#4747db"/><stop offset="0.527" stop-color="#3737bf"/><stop offset="0.567" stop-color="#030360"/><stop offset="0.574" stop-color="#000b62"/><stop offset="0.587" stop-color="#00357d"/><stop offset="0.622" stop-color="#006da1"/><stop offset="0.655" stop-color="#008ab3"/><stop offset="0.688" stop-color="#0098bd"/><stop offset="0.749" stop-color="#009fc1"/><stop offset="1.000" stop-color="#009fc1"/></linearGradient><linearGradient id="f50" x1="0" y1="0" x2="0" y2="1"><stop offset="0.000" stop-color="#0083af"/><stop offset="0.200" stop-color="#0083af"/><stop offset="0.209" stop-color="#007baa"/><stop offset="0.255" stop-color="#007baa"/><stop offset="0.270" stop-color="#0074a6"/><stop offset="0.295" stop-color="#0074a6"/><stop offset="0.310" stop-color="#006da1"/><stop offset="0.341" stop-color="#00669d"/><stop offset="0.378" stop-color="#004386"/><stop offset="0.398" stop-color="#00196b"/><stop offset="0.409" stop-color="#01015d"/><stop offset="0.429" stop-color="#161683"/><stop offset="0.453" stop-color="#3939c2"/><stop offset="0.455" stop-color="#4747db"/><stop offset="0.525" stop-color="#4747db"/><stop offset="0.527" stop-color="#3737bf"/><stop offset="0.567" stop-color="#030360"/><stop offset="0.574" stop-color="#000b62"/><stop offset="0.587" stop-color="#00357d"/><stop offset="0.620" stop-color="#006da1"/><stop offset="0.653" stop-color="#008ab3"/><stop offset="0.684" stop-color="#0098bd"/><stop offset="0.745" stop-color="#009fc1"/><stop offset="1.000" stop-color="#009fc1"/></linearGradient></defs><rect x="0" y="0" width="6.5" height="456" fill="url(#f0)"/><rect x="6" y="0" width="6.5" height="456" fill="url(#f0)"/><rect x="12" y="0" width="6.5" height="456" fill="url(#f0)"/><rect x="18" y="0" width="6.5" height="456" fill="url(#f1)"/><rect x="24" y="0" width="6.5" height="456" fill="url(#f2)"/><rect x="30" y="0" width="6.5" height="456" fill="url(#f3)"/><rect x="36" y="0" width="6.5" height="456" fill="url(#f4)"/><rect x="42" y="0" width="6.5" height="456" fill="url(#f5)"/><rect x="48" y="0" width="6.5" height="456" fill="url(#f6)"/><rect x="54" y="0" width="6.5" height="456" fill="url(#f7)"/><rect x="60" y="0" width="6.5" height="456" fill="url(#f8)"/><rect x="66" y="0" width="6.5" height="456" fill="url(#f9)"/><rect x="72" y="0" width="6.5" height="456" fill="url(#f10)"/><rect x="78" y="0" width="6.5" height="456" fill="url(#f11)"/><rect x="84" y="0" width="6.5" height="456" fill="url(#f12)"/><rect x="90" y="0" width="6.5" height="456" fill="url(#f12)"/><rect x="96" y="0" width="6.5" height="456" fill="url(#f13)"/><rect x="102" y="0" width="6.5" height="456" fill="url(#f14)"/><rect x="108" y="0" width="6.5" height="456" fill="url(#f15)"/><rect x="114" y="0" width="6.5" height="456" fill="url(#f16)"/><rect x="120" y="0" width="6.5" height="456" fill="url(#f17)"/><rect x="126" y="0" width="6.5" height="456" fill="url(#f18)"/><rect x="132" y="0" width="6.5" height="456" fill="url(#f19)"/><rect x="138" y="0" width="6.5" height="456" fill="url(#f20)"/><rect x="144" y="0" width="6.5" height="456" fill="url(#f21)"/><rect x="150" y="0" width="6.5" height="456" fill="url(#f22)"/><rect x="156" y="0" width="6.5" height="456" fill="url(#f23)"/><rect x="162" y="0" width="6.5" height="456" fill="url(#f24)"/><rect x="168" y="0" width="6.5" height="456" fill="url(#f25)"/><rect x="174" y="0" width="6.5" height="456" fill="url(#f26)"/><rect x="180" y="0" width="6.5" height="456" fill="url(#f27)"/><rect x="186" y="0" width="6.5" height="456" fill="url(#f28)"/><rect x="192" y="0" width="6.5" height="456" fill="url(#f29)"/><rect x="198" y="0" width="6.5" height="456" fill="url(#f30)"/><rect x="204" y="0" width="6.5" height="456" fill="url(#f31)"/><rect x="210" y="0" width="6.5" height="456" fill="url(#f32)"/><rect x="216" y="0" width="6.5" height="456" fill="url(#f33)"/><rect x="222" y="0" width="6.5" height="456" fill="url(#f34)"/><rect x="228" y="0" width="6.5" height="456" fill="url(#f35)"/><rect x="234" y="0" width="6.5" height="456" fill="url(#f36)"/><rect x="240" y="0" width="6.5" height="456" fill="url(#f37)"/><rect x="246" y="0" width="6.5" height="456" fill="url(#f38)"/><rect x="252" y="0" width="6.5" height="456" fill="url(#f39)"/><rect x="258" y="0" width="6.5" height="456" fill="url(#f40)"/><rect x="264" y="0" width="6.5" height="456" fill="url(#f41)"/><rect x="270" y="0" width="6.5" height="456" fill="url(#f42)"/><rect x="276" y="0" width="6.5" height="456" fill="url(#f43)"/><rect x="282" y="0" width="6.5" height="456" fill="url(#f13)"/><rect x="288" y="0" width="6.5" height="456" fill="url(#f12)"/><rect x="294" y="0" width="6.5" height="456" fill="url(#f12)"/><rect x="300" y="0" width="6.5" height="456" fill="url(#f11)"/><rect x="306" y="0" width="6.5" height="456" fill="url(#f10)"/><rect x="312" y="0" width="6.5" height="456" fill="url(#f9)"/><rect x="318" y="0" width="6.5" height="456" fill="url(#f8)"/><rect x="324" y="0" width="6.5" height="456" fill="url(#f44)"/><rect x="330" y="0" width="6.5" height="456" fill="url(#f45)"/><rect x="336" y="0" width="6.5" height="456" fill="url(#f46)"/><rect x="342" y="0" width="6.5" height="456" fill="url(#f47)"/><rect x="348" y="0" width="6.5" height="456" fill="url(#f48)"/><rect x="354" y="0" width="6.5" height="456" fill="url(#f49)"/><rect x="360" y="0" width="6.5" height="456" fill="url(#f50)"/><rect x="366" y="0" width="6.5" height="456" fill="url(#f0)"/><rect x="372" y="0" width="6.5" height="456" fill="url(#f0)"/><rect x="378" y="0" width="5.5" height="456" fill="url(#f0)"/></svg>
<canvas id="fld" class="a" style="left:352px;top:160px" width="383" height="456"></canvas>
<svg class="a" style="left:0;top:0;overflow:visible" width="1280" height="800">
<path d="M352.5 160.5H734.5V615.5" stroke="#222" stroke-width="1" fill="none"/><path d="M352.5 160V615.6H735" stroke="#000" stroke-width="1.5" fill="none"/>
<rect x="637.9" y="160" width="2" height="455.5" fill="#000"/>
<path d="M352.3 615.5v-4M358.7 615.5v-4M365.0 615.5v-4M371.4 615.5v-4M377.8 615.5v-4M384.2 615.5v-8M390.5 615.5v-4M396.9 615.5v-4M403.3 615.5v-4M409.6 615.5v-4M416.0 615.5v-4M422.4 615.5v-4M428.7 615.5v-4M435.1 615.5v-4M441.5 615.5v-4M447.9 615.5v-8M454.2 615.5v-4M460.6 615.5v-4M467.0 615.5v-4M473.3 615.5v-4M479.7 615.5v-4M486.1 615.5v-4M492.4 615.5v-4M498.8 615.5v-4M505.2 615.5v-4M511.6 615.5v-8M517.9 615.5v-4M524.3 615.5v-4M530.7 615.5v-4M537.0 615.5v-4M543.4 615.5v-4M549.8 615.5v-4M556.1 615.5v-4M562.5 615.5v-4M568.9 615.5v-4M575.2 615.5v-8M581.6 615.5v-4M588.0 615.5v-4M594.4 615.5v-4M600.7 615.5v-4M607.1 615.5v-4M613.5 615.5v-4M619.8 615.5v-4M626.2 615.5v-4M632.6 615.5v-4M639.0 615.5v-8M645.3 615.5v-4M651.7 615.5v-4M658.1 615.5v-4M664.4 615.5v-4M670.8 615.5v-4M677.2 615.5v-4M683.5 615.5v-4M689.9 615.5v-4M696.3 615.5v-4M702.6 615.5v-8M709.0 615.5v-4M715.4 615.5v-4M721.8 615.5v-4M728.1 615.5v-4M734.5 615.5v-4M352.3 615.5h4M352.3 609.4h4M352.3 603.4h4M352.3 597.3h4M352.3 591.2h4M352.3 585.1h4M352.3 579.1h4M352.3 573.0h4M352.3 566.9h4M352.3 560.8h4M352.3 554.8h8M352.3 548.7h4M352.3 542.6h4M352.3 536.5h4M352.3 530.5h4M352.3 524.4h4M352.3 518.3h4M352.3 512.3h4M352.3 506.2h4M352.3 500.1h4M352.3 494.0h8M352.3 488.0h4M352.3 481.9h4M352.3 475.8h4M352.3 469.7h4M352.3 463.7h4M352.3 457.6h4M352.3 451.5h4M352.3 445.4h4M352.3 439.4h4M352.3 433.3h8M352.3 427.2h4M352.3 421.2h4M352.3 415.1h4M352.3 409.0h4M352.3 402.9h4M352.3 396.9h4M352.3 390.8h4M352.3 384.7h4M352.3 378.6h4M352.3 372.6h8M352.3 366.5h4M352.3 360.4h4M352.3 354.3h4M352.3 348.3h4M352.3 342.2h4M352.3 336.1h4M352.3 330.1h4M352.3 324.0h4M352.3 317.9h4M352.3 311.8h8M352.3 305.8h4M352.3 299.7h4M352.3 293.6h4M352.3 287.5h4M352.3 281.5h4M352.3 275.4h4M352.3 269.3h4M352.3 263.2h4M352.3 257.2h4M352.3 251.1h8M352.3 245.0h4M352.3 239.0h4M352.3 232.9h4M352.3 226.8h4M352.3 220.7h4M352.3 214.7h4M352.3 208.6h4M352.3 202.5h4M352.3 196.4h4M352.3 190.4h8M352.3 184.3h4M352.3 178.2h4M352.3 172.1h4M352.3 166.1h4M352.3 160.0h4" stroke="#000" stroke-width="1.2" fill="none"/>
<text x="384.2" y="629.5" font-family="Liberation Mono" font-weight="bold" font-style="italic" font-size="14" letter-spacing="1.6" text-anchor="middle">1.O</text>
<text x="447.9" y="629.5" font-family="Liberation Mono" font-weight="bold" font-style="italic" font-size="14" letter-spacing="1.6" text-anchor="middle">2.O</text>
<text x="511.6" y="629.5" font-family="Liberation Mono" font-weight="bold" font-style="italic" font-size="14" letter-spacing="1.6" text-anchor="middle">3.O</text>
<text x="575.2" y="629.5" font-family="Liberation Mono" font-weight="bold" font-style="italic" font-size="14" letter-spacing="1.6" text-anchor="middle">4.O</text>
<text x="639.0" y="629.5" font-family="Liberation Mono" font-weight="bold" font-style="italic" font-size="14" letter-spacing="1.6" text-anchor="middle">5.O</text>
<text x="702.6" y="629.5" font-family="Liberation Mono" font-weight="bold" font-style="italic" font-size="14" letter-spacing="1.6" text-anchor="middle">6.O</text>
<text x="350.5" y="558.2" font-family="Liberation Mono" font-weight="bold" font-style="italic" font-size="14.5" letter-spacing="0.8" text-anchor="end">2</text>
<text x="350.5" y="497.4" font-family="Liberation Mono" font-weight="bold" font-style="italic" font-size="14.5" letter-spacing="0.8" text-anchor="end">4</text>
<text x="350.5" y="436.7" font-family="Liberation Mono" font-weight="bold" font-style="italic" font-size="14.5" letter-spacing="0.8" text-anchor="end">6</text>
<text x="350.5" y="376.0" font-family="Liberation Mono" font-weight="bold" font-style="italic" font-size="14.5" letter-spacing="0.8" text-anchor="end">8</text>
<text x="350.5" y="315.2" font-family="Liberation Mono" font-weight="bold" font-style="italic" font-size="14.5" letter-spacing="0.8" text-anchor="end">1O</text>
<text x="350.5" y="254.5" font-family="Liberation Mono" font-weight="bold" font-style="italic" font-size="14.5" letter-spacing="0.8" text-anchor="end">12</text>
<text x="350.5" y="193.8" font-family="Liberation Mono" font-weight="bold" font-style="italic" font-size="14.5" letter-spacing="0.8" text-anchor="end">14</text>
<text x="544" y="653.3" font-family="Liberation Mono" font-weight="bold" font-style="italic" font-size="16" letter-spacing="0.1" text-anchor="middle">x (1O^-3 units)</text>
<text transform="translate(315,383) rotate(-90)" x="0" y="0" font-family="Liberation Mono" font-weight="bold" font-style="italic" font-size="16" text-anchor="middle">y (1O^-3 units)</text>
<text x="276" y="197" font-family="Liberation Sans" font-size="11.3" fill="#333">Pseudocolor</text>
<text x="276" y="208.5" font-family="Liberation Sans" font-size="11.3" fill="#333">Var: Phi</text>
<defs><linearGradient id="hd" x1="0" y1="1" x2="0" y2="0"><stop offset="0" stop-color="#4747db"/><stop offset="0.143" stop-color="#00005b"/><stop offset="0.285" stop-color="#00ffff"/><stop offset="0.429" stop-color="#007f00"/><stop offset="0.571" stop-color="#ffff00"/><stop offset="0.714" stop-color="#ff6100"/><stop offset="0.857" stop-color="#6b0000"/><stop offset="1" stop-color="#e04c4c"/></linearGradient></defs>
<rect x="276" y="216.5" width="19.5" height="92.5" fill="url(#hd)"/>
<path d="M296 216.5h4" stroke="#333" stroke-width="1"/>
<text x="304" y="220.5" font-family="Liberation Sans" font-size="11" fill="#333">5.379e+04</text>
<path d="M296 239.6h4" stroke="#333" stroke-width="1"/>
<text x="304" y="243.6" font-family="Liberation Sans" font-size="11" fill="#333">3.634e+04</text>
<path d="M296 262.8h4" stroke="#333" stroke-width="1"/>
<text x="304" y="266.8" font-family="Liberation Sans" font-size="11" fill="#333">1.889e+04</text>
<path d="M296 285.9h4" stroke="#333" stroke-width="1"/>
<text x="304" y="289.9" font-family="Liberation Sans" font-size="11" fill="#333">1446.</text>
<path d="M296 309.0h4" stroke="#333" stroke-width="1"/>
<text x="301" y="313.0" font-family="Liberation Sans" font-size="11" fill="#333">-1.600e+04</text>
<text x="276" y="323" font-family="Liberation Sans" font-size="11.3" fill="#333">Max: 5.379e+04</text>
<text x="276" y="335" font-family="Liberation Sans" font-size="11.3" fill="#333">Min: -1.600e+04</text>
<path d="M864.5 160.5H1246.5V615.5" stroke="#444" stroke-width="1" fill="none"/><path d="M864.5 160V615.5H1247" stroke="#000" stroke-width="1.5" fill="none"/>
<path d="M869.7 615.4v-4M874.9 615.4v-4M880.1 615.4v-4M885.3 615.4v-4M890.5 615.4v-4M895.7 615.4v-4M900.9 615.4v-4M906.1 615.4v-4M911.3 615.4v-4M916.5 615.4v-8M921.7 615.4v-4M926.9 615.4v-4M932.1 615.4v-4M937.3 615.4v-4M942.5 615.4v-4M947.7 615.4v-4M952.9 615.4v-4M958.1 615.4v-4M963.3 615.4v-4M968.5 615.4v-8M973.7 615.4v-4M978.9 615.4v-4M984.1 615.4v-4M989.3 615.4v-4M994.5 615.4v-4M999.7 615.4v-4M1004.9 615.4v-4M1010.1 615.4v-4M1015.3 615.4v-4M1020.5 615.4v-8M1025.7 615.4v-4M1030.9 615.4v-4M1036.1 615.4v-4M1041.3 615.4v-4M1046.5 615.4v-4M1051.7 615.4v-4M1056.9 615.4v-4M1062.1 615.4v-4M1067.3 615.4v-4M1072.5 615.4v-8M1077.7 615.4v-4M1082.9 615.4v-4M1088.1 615.4v-4M1093.3 615.4v-4M1098.5 615.4v-4M1103.7 615.4v-4M1108.9 615.4v-4M1114.1 615.4v-4M1119.3 615.4v-4M1124.5 615.4v-8M1129.7 615.4v-4M1134.9 615.4v-4M1140.1 615.4v-4M1145.3 615.4v-4M1150.5 615.4v-4M1155.7 615.4v-4M1160.9 615.4v-4M1166.1 615.4v-4M1171.3 615.4v-4M1176.5 615.4v-8M1181.7 615.4v-4M1186.9 615.4v-4M1192.1 615.4v-4M1197.3 615.4v-4M1202.5 615.4v-4M1207.7 615.4v-4M1212.9 615.4v-4M1218.1 615.4v-4M1223.3 615.4v-4M1228.5 615.4v-8M1233.7 615.4v-4M1238.9 615.4v-4M1244.1 615.4v-4M864.5 165.7h4M864.5 171.4h4M864.5 177.1h4M864.5 182.8h4M864.5 188.5h4M864.5 194.2h4M864.5 199.8h4M864.5 205.5h4M864.5 211.2h4M864.5 216.9h8M864.5 222.6h4M864.5 228.3h4M864.5 234.0h4M864.5 239.7h4M864.5 245.4h4M864.5 251.1h4M864.5 256.8h4M864.5 262.5h4M864.5 268.2h4M864.5 273.9h8M864.5 279.5h4M864.5 285.2h4M864.5 290.9h4M864.5 296.6h4M864.5 302.3h4M864.5 308.0h4M864.5 313.7h4M864.5 319.4h4M864.5 325.1h4M864.5 330.8h8M864.5 336.5h4M864.5 342.2h4M864.5 347.9h4M864.5 353.5h4M864.5 359.2h4M864.5 364.9h4M864.5 370.6h4M864.5 376.3h4M864.5 382.0h4M864.5 387.7h8M864.5 393.4h4M864.5 399.1h4M864.5 404.8h4M864.5 410.5h4M864.5 416.2h4M864.5 421.9h4M864.5 427.5h4M864.5 433.2h4M864.5 438.9h4M864.5 444.6h8M864.5 450.3h4M864.5 456.0h4M864.5 461.7h4M864.5 467.4h4M864.5 473.1h4M864.5 478.8h4M864.5 484.5h4M864.5 490.2h4M864.5 495.9h4M864.5 501.5h8M864.5 507.2h4M864.5 512.9h4M864.5 518.6h4M864.5 524.3h4M864.5 530.0h4M864.5 535.7h4M864.5 541.4h4M864.5 547.1h4M864.5 552.8h4M864.5 558.5h8M864.5 564.2h4M864.5 569.9h4M864.5 575.6h4M864.5 581.2h4M864.5 586.9h4M864.5 592.6h4M864.5 598.3h4M864.5 604.0h4M864.5 609.7h4" stroke="#000" stroke-width="1.2" fill="none"/>
<text x="916.5" y="629.5" font-family="Liberation Mono" font-weight="bold" font-style="italic" font-size="14" letter-spacing="1" text-anchor="middle">2</text>
<text x="968.5" y="629.5" font-family="Liberation Mono" font-weight="bold" font-style="italic" font-size="14" letter-spacing="1" text-anchor="middle">4</text>
<text x="1020.5" y="629.5" font-family="Liberation Mono" font-weight="bold" font-style="italic" font-size="14" letter-spacing="1" text-anchor="middle">6</text>
<text x="1072.5" y="629.5" font-family="Liberation Mono" font-weight="bold" font-style="italic" font-size="14" letter-spacing="1" text-anchor="middle">8</text>
<text x="1124.5" y="629.5" font-family="Liberation Mono" font-weight="bold" font-style="italic" font-size="14" letter-spacing="1" text-anchor="middle">10</text>
<text x="1176.5" y="629.5" font-family="Liberation Mono" font-weight="bold" font-style="italic" font-size="14" letter-spacing="1" text-anchor="middle">12</text>
<text x="1228.5" y="629.5" font-family="Liberation Mono" font-weight="bold" font-style="italic" font-size="14" letter-spacing="1" text-anchor="middle">14</text>
<text x="862.5" y="163.2" font-family="Liberation Mono" font-weight="bold" font-style="italic" font-size="13" letter-spacing="1.6" stroke="#000" stroke-width="0.3" text-anchor="end">O</text>
<text x="862.5" y="220.1" font-family="Liberation Mono" font-weight="bold" font-style="italic" font-size="13" letter-spacing="1.6" stroke="#000" stroke-width="0.3" text-anchor="end">&#8211;2</text>
<text x="862.5" y="277.1" font-family="Liberation Mono" font-weight="bold" font-style="italic" font-size="13" letter-spacing="1.6" stroke="#000" stroke-width="0.3" text-anchor="end">&#8211;4</text>
<text x="862.5" y="334.0" font-family="Liberation Mono" font-weight="bold" font-style="italic" font-size="13" letter-spacing="1.6" stroke="#000" stroke-width="0.3" text-anchor="end">&#8211;6</text>
<text x="862.5" y="390.9" font-family="Liberation Mono" font-weight="bold" font-style="italic" font-size="13" letter-spacing="1.6" stroke="#000" stroke-width="0.3" text-anchor="end">&#8211;8</text>
<text x="862.5" y="447.8" font-family="Liberation Mono" font-weight="bold" font-style="italic" font-size="13" letter-spacing="1.6" stroke="#000" stroke-width="0.3" text-anchor="end">&#8211;1O</text>
<text x="862.5" y="504.7" font-family="Liberation Mono" font-weight="bold" font-style="italic" font-size="13" letter-spacing="1.6" stroke="#000" stroke-width="0.3" text-anchor="end">&#8211;12</text>
<text x="862.5" y="561.7" font-family="Liberation Mono" font-weight="bold" font-style="italic" font-size="13" letter-spacing="1.6" stroke="#000" stroke-width="0.3" text-anchor="end">&#8211;14</text>
<text x="1055" y="653.3" font-family="Liberation Mono" font-weight="bold" font-style="italic" font-size="16" letter-spacing="0.2" text-anchor="middle">Distance (1O^-3 units)</text>
<text transform="translate(814,387) rotate(-90)" x="0" y="0" font-family="Liberation Mono" font-weight="bold" font-style="italic" font-size="16" letter-spacing="0.35" text-anchor="middle">Value (1O^3 units)</text>
<text x="787" y="196" font-family="Liberation Sans" font-size="9" fill="#333">Curve</text>
<text x="787" y="204" font-family="Liberation Sans" font-size="9" fill="#333">Var: Phi</text>
<rect x="765" y="205.8" width="53" height="2.2" fill="#000"/>
<path d="M864.5 173.7 L879.6 173.7 C881.0 172.9 885.2 171.0 887.9 169.1 C890.6 167.2 893.4 163.8 896.0 162.3 C898.5 160.8 901.8 160.4 903.0 160.0 L956.0 160.0 C958.7 161.3 966.2 163.7 971.9 168.0 C977.6 172.3 984.7 178.9 990.1 185.9 C995.5 192.9 1000.1 201.7 1004.1 210.1 C1008.1 218.4 1011.4 227.7 1014.0 236.0 C1016.6 244.3 1018.0 250.2 1020.0 259.9 C1022.0 269.6 1023.4 274.0 1026.0 294.1 C1028.5 314.1 1032.5 350.7 1035.1 380.0 C1037.6 409.3 1040.0 455.0 1041.0 470.0 L1051.4 615.4 L1067.3 615.4 L1075.6 514.9 C1076.9 495.8 1081.3 426.9 1083.2 399.9 C1085.0 372.9 1085.5 366.3 1086.8 353.0 C1088.1 339.6 1089.3 331.4 1091.0 320.0 C1092.7 308.5 1094.9 294.1 1096.9 284.1 C1098.9 274.1 1100.4 267.6 1102.9 259.9 C1105.4 252.2 1108.5 244.3 1112.0 238.0 C1115.5 231.7 1119.3 227.0 1124.0 222.0 C1128.7 217.1 1134.1 212.3 1140.1 208.1 C1146.1 203.9 1151.8 200.5 1160.1 197.0 C1168.4 193.5 1180.1 189.4 1190.0 187.0 C1200.0 184.7 1210.5 183.9 1219.9 183.1 C1229.3 182.2 1241.9 182.1 1246.3 181.9" stroke="#000" stroke-width="2.1" fill="none" stroke-linejoin="round"/>
</svg>
<script>
(function(){
var c=document.getElementById('fld'),g=c.getContext('2d'),W=c.width,Hh=c.height;
var img=g.createImageData(W,Hh),D=img.data;
function inRR(x,y,x0,x1,yt,r){if(y>yt||x<x0||x>x1)return false;if(y>yt-r){var cx=x<x0+r?x0+r:(x>x1-r?x1-r:x);var dx=x-cx,dy=y-(yt-r);return dx*dx+dy*dy<=r*r;}return true;}
function interp(P,d){for(var i=1;i<P.length;i++){if(d<=P[i][0]){var a=P[i-1],b=P[i];return a[1]+(b[1]-a[1])*(d-a[0])/(b[0]-a[0]);}}return 0;}
var botP=[[0,1],[0.001,0.88],[0.25,0.68],[0.45,0.5],[0.64,0.376],[0.9,0.25],[1.34,0.125],[1.8,0.05],[2.2,0.012],[2.45,0],[99,0]];
var topP=[[0,1],[0.001,0.88],[0.25,0.66],[0.45,0.47],[0.67,0.344],[0.9,0.24],[1.2,0.15],[1.58,0.088],[2.5,0.04],[3.5,0.015],[4.4,0],[99,0]];
var CM=[[0,71,71,219],[0.143,0,0,91],[0.285,0,255,255],[0.429,0,127,0],[0.571,255,255,0],[0.714,255,97,0],[0.857,107,0,0],[1,224,76,76]];
var EY0=7.11,EY1=8.19,E=[[0.5,2.48],[4.52,6.5]];var HX=1.95,PP=0,GA=0.1,GW=0.6,GH=1.8;
for(var j=0;j<Hh;j++){
 var y=(615.5-(160+j+0.5))/30.3667;
 for(var i=0;i<W;i++){
  var x=0.5+(352+i+0.5-352.3)/63.7;
  var gs=0,inside=false;
  for(var k=0;k<2;k++){
   var dx=Math.max(E[k][0]-x,0,x-E[k][1]),dy=Math.max(EY0-y,0,y-EY1);
   if(dx==0&&dy==0){inside=true;break;}
   var sx=Math.max(E[k][0]-x,0,x-E[k][1])*HX,sy=y-7.65;var dd=Math.max(Math.sqrt(dx*dx+dy*dy),Math.sqrt(sx*sx+sy*sy)-0.54);
   var w=Math.min(1,Math.max(0,(y-7.16)/0.99));w=w*w*(3-2*w);var u=Math.min(1,Math.max(0,(6.4-y)/1.8));u=u*u*(3-2*u);var b1=Math.min(1,Math.max(0,(x-0.75)/0.7)),b2=Math.min(1,Math.max(0,(6.25-x)/0.7));b1=b1*b1*(3-2*b1);b2=b2*b2*(3-2*b2);var sc=1-u*(0.2*b1*b2+0.06*Math.exp(-Math.pow((x-3.5)/1.2,2)));var gv=w*interp(topP,dd)+(1-w)*interp(botP,dd*sc);
   if(PP>0)gs+=Math.pow(gv,PP);else gs=1-(1-gs)*(1-gv);
  }
  if(!inside&&GA>0){var rx=(x-3.5)/GW,ry=(y-7.65)/(y<7.65?GH*1.15:GH);var gg2=GA*Math.max(0,Math.exp(-(rx*rx+ry*ry))-0.08)/0.92;gs=1-(1-gs)*(1-gg2);}
  var G=inside?1:(PP>0?Math.min(1,Math.pow(gs,1/PP)):gs);
  var B;
  if(y>=9){B=-790;}else if(y<=6){B=150;}else{B=150+(-790-150)*(y-6)/3;}
  if(y<6){ if(inRR(x,y,1.15,5.83,0.91,0.22))B=-330; else if(inRR(x,y,1.02,5.96,1.17,0.25))B=-80; }
  var v=B+(-16000-B)*G;
  var t=(v+16000)/69790; t=Math.floor(t*255)/255;
  var r,gg,bb;
  for(var m=1;m<CM.length;m++){if(t<=CM[m][0]){var A=CM[m-1],Bc=CM[m],f=(t-A[0])/(Bc[0]-A[0]);r=A[1]+(Bc[1]-A[1])*f;gg=A[2]+(Bc[2]-A[2])*f;bb=A[3]+(Bc[3]-A[3])*f;break;}}
  var o=(j*W+i)*4;D[o]=r;D[o+1]=gg;D[o+2]=bb;D[o+3]=255;
 }
}
g.putImageData(img,0,0);
})();
</script>
<!--/PLOTS-->
</body></html>
